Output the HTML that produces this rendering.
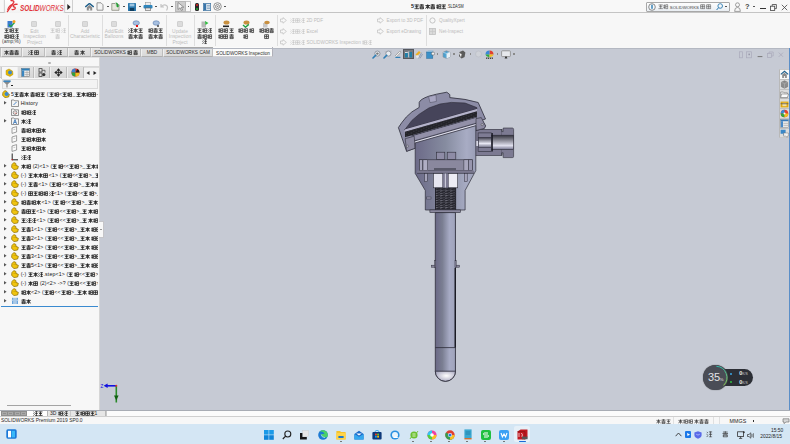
<!DOCTYPE html>
<html><head><meta charset="utf-8">
<style>
*{box-sizing:border-box}
body{margin:0;width:790px;height:444px;overflow:hidden;position:relative;background:#f7f7f7;font-family:"Liberation Sans",sans-serif;color:#333}
.a{position:absolute}
.t{position:absolute;white-space:nowrap;line-height:1}
.c{position:absolute;white-space:nowrap;line-height:1;text-align:center;width:60px}
svg.g{display:inline-block;width:1em;height:1em;vertical-align:-0.14em;overflow:visible}
svg.g use{stroke-width:1.05}
b svg.g use{stroke-width:1.6}
.m svg.g use{stroke-width:1.5}
</style></head><body>
<svg width="0" height="0" style="position:absolute"><defs><symbol id="g0" viewBox="0 0 10 10"><path d="M1.2 1.4 H8.8 V8.8 H1.2Z M1.2 5 H8.8 M5 1.4 V8.8" fill="none" stroke="currentColor"/></symbol><symbol id="g1" viewBox="0 0 10 10"><path d="M1 1.8 H9 M2 5 H8 M0.8 8.8 H9.2 M5 1.2 V8.8" fill="none" stroke="currentColor"/></symbol><symbol id="g2" viewBox="0 0 10 10"><path d="M2.4 0.8 V9.4 M0.6 3.4 H4 M0.8 6.6 H3.8 M5 1.4 H9 V8.8 H5Z M5 5 H9" fill="none" stroke="currentColor"/></symbol><symbol id="g3" viewBox="0 0 10 10"><path d="M0.8 2.8 H9.2 M5 0.6 V9.6 M4.6 3.4 L1 8.6 M5.4 3.4 L9 8.6 M2.5 6 H7.5" fill="none" stroke="currentColor"/></symbol><symbol id="g4" viewBox="0 0 10 10"><path d="M1.4 1.6 H8.6 M5 0.4 V3.8 M0.8 3.8 H9.2 M2 5.6 H8 V9.2 H2Z M2 7.4 H8" fill="none" stroke="currentColor"/></symbol><symbol id="g5" viewBox="0 0 10 10"><path d="M1.2 1.6 L3 3 M0.8 4.8 L2.6 6 M1 9.2 L3 6.8 M4.4 1.4 H9.4 M6.8 0.8 V9.4 M4.4 5 H9.4 M4.4 9 H9.4" fill="none" stroke="currentColor"/></symbol></defs></svg><!-- title bar -->
<div class="a" style="left:0;top:0;width:790px;height:13px;background:#f8f8f8;border-bottom:1px solid #c4c4c4"></div>
<div class="a" style="left:4px;top:-1px;width:61px;height:15px;background:linear-gradient(#ffffff,#f2f2f2);border:1px solid #d4d4d4;border-radius:0 0 2px 2px;box-shadow:0 1px 1px #c0c0c0"></div>
<svg class="a" style="left:0;top:0" width="20" height="14" viewBox="0 0 20 14"><path d="M11 0.6 Q14.6 0.6 13.6 2.6 L7.4 11.6" fill="none" stroke="#e2363b" stroke-width="1.3" stroke-linecap="round"/><path d="M12.6 4.6 Q9 5 7.6 10" fill="none" stroke="#e2363b" stroke-width="1.1"/><path d="M17.6 4.4 Q14.2 3.8 13.2 5.6 Q12.8 6.6 14.6 7.2 Q15.8 7.8 14.8 9 Q13.6 10 11.6 9.4" fill="none" stroke="#e2363b" stroke-width="1.3"/></svg>
<div class="t" style="left:20px;top:3.9px;font-size:8.4px;font-weight:bold;font-style:italic;color:#e2363b;transform:scaleX(0.765);transform-origin:0 0">SOLID<span style="font-weight:normal">WORKS</span></div>
<svg class="a" style="left:66.5px;top:3.5px" width="4" height="6"><path d="M0.3 0 L3.6 3 L0.3 6Z" fill="#222"/></svg>
<div class="a" style="left:72px;top:0;width:1px;height:12px;background:#d0d0d0"></div>
<!-- home -->
<svg class="a" style="left:85px;top:3px" width="9" height="8" viewBox="0 0 9 8"><path d="M0.3 4 L4.5 0.4 L8.7 4" fill="none" stroke="#1f5f8b" stroke-width="1.4"/><path d="M1.8 4.2 L4.5 2 L7.2 4.2 V7.6 H1.8Z" fill="#8c8c8c"/><rect x="3.8" y="5.4" width="1.4" height="2.2" fill="#eee"/></svg>
<!-- new -->
<svg class="a" style="left:96px;top:2px" width="8" height="9" viewBox="0 0 8 9"><path d="M1 0.8 H5 L7 2.8 V8.2 H1Z" fill="#f4f4f4" stroke="#8a8a8a" stroke-width="0.9"/></svg>
<div class="a" style="left:107px;top:6px;width:1.8px;height:1.2px;background:#555"></div>
<!-- open -->
<svg class="a" style="left:111px;top:2px" width="10" height="9" viewBox="0 0 10 9"><path d="M0.8 1.5 H4 L5 2.5 H8 V8.3 H0.8Z" fill="#e6e6dc" stroke="#8a8a80" stroke-width="0.8"/><path d="M4.6 0.6 Q7.2 0.6 7.2 3.4 L8.6 3.4 L6.6 5.6 L4.6 3.4 L6 3.4 Q6 1.6 4.6 1.6Z" fill="#20a030"/></svg>
<div class="a" style="left:123px;top:6px;width:1.8px;height:1.2px;background:#555"></div>
<!-- save -->
<svg class="a" style="left:128px;top:3px" width="8" height="8" viewBox="0 0 8 8"><rect x="0" y="0" width="8" height="8" rx="0.6" fill="#2a78ad"/><rect x="1.6" y="0.6" width="4.8" height="2.8" fill="#9cc4e0"/><rect x="1.8" y="5" width="4.4" height="3" fill="#0f3e60"/></svg>
<div class="a" style="left:139px;top:6px;width:1.8px;height:1.2px;background:#555"></div>
<!-- print -->
<svg class="a" style="left:143px;top:2px" width="10" height="9" viewBox="0 0 10 9"><rect x="2.5" y="0.6" width="5" height="2.6" fill="#f0f0f0" stroke="#999" stroke-width="0.6"/><rect x="0.5" y="3" width="9" height="3.6" rx="1" fill="#2f86bd"/><rect x="2.3" y="6" width="5.4" height="2.4" fill="#e8e8e8" stroke="#666" stroke-width="0.6"/></svg>
<div class="a" style="left:155px;top:6px;width:1.8px;height:1.2px;background:#555"></div>
<!-- undo -->
<svg class="a" style="left:160px;top:3px" width="9" height="8" viewBox="0 0 9 8"><path d="M1 1 L1 4 L4 4 M1.5 3.5 Q4 1 6.5 2.5 Q8.5 4 6.5 7.5" fill="none" stroke="#c4c4c4" stroke-width="1.2"/></svg>
<div class="a" style="left:171px;top:6px;width:1.8px;height:1.2px;background:#555"></div>
<!-- select -->
<div class="a" style="left:175px;top:1px;width:11px;height:11px;background:#cdcdcd;border:1px solid #b8b8b8"></div>
<div class="a" style="left:186px;top:1px;width:5px;height:11px;background:#fafafa;border:1px solid #c8c8c8;border-left:none"></div>
<svg class="a" style="left:177px;top:2px" width="8" height="9" viewBox="0 0 8 9"><path d="M1 0.5 L1 7.5 L3 5.8 L4.5 8.6 L5.6 8 L4.2 5.3 L6.8 5.2Z" fill="#f5f5f5" stroke="#777" stroke-width="0.7"/></svg>
<div class="a" style="left:187.5px;top:6px;width:1.8px;height:1.2px;background:#555"></div>
<!-- traffic -->
<div class="a" style="left:195px;top:3px;width:4px;height:8px;background:#2a2a2a;border-radius:1.5px"></div>
<div class="a" style="left:196px;top:4px;width:2px;height:2px;background:#e02020;border-radius:1px"></div>
<div class="a" style="left:196px;top:7.5px;width:2px;height:2px;background:#20b030;border-radius:1px"></div>
<!-- file props -->
<svg class="a" style="left:203px;top:3px" width="8" height="8" viewBox="0 0 8 8"><rect x="0.4" y="0.4" width="7.2" height="7.2" fill="#e8eef4" stroke="#4a7ca8" stroke-width="0.8"/><rect x="0.8" y="0.8" width="2.4" height="6.4" fill="#3a76aa"/><path d="M4 2.4 H7 M4 4 H7 M4 5.6 H7" stroke="#6a8fb0" stroke-width="0.7"/></svg>
<!-- gear -->
<svg class="a" style="left:213px;top:2px" width="9" height="9" viewBox="0 0 9 9"><circle cx="4.5" cy="4.5" r="3.8" fill="none" stroke="#888" stroke-width="0.9"/><circle cx="4.5" cy="4.5" r="2" fill="none" stroke="#888" stroke-width="0.9"/><circle cx="4.5" cy="4.5" r="0.8" fill="#888"/></svg>
<div class="a" style="left:224px;top:6px;width:1.8px;height:1.2px;background:#555"></div>
<!-- title -->
<div class="t" style="left:411px;top:3.6px;font-size:5.45px;color:#222"><b>5<svg class="g" viewBox="0 0 10 10"><use href="#g1"/></svg><svg class="g" viewBox="0 0 10 10"><use href="#g4"/></svg><svg class="g" viewBox="0 0 10 10"><use href="#g3"/></svg><svg class="g" viewBox="0 0 10 10"><use href="#g4"/></svg><svg class="g" viewBox="0 0 10 10"><use href="#g2"/></svg><svg class="g" viewBox="0 0 10 10"><use href="#g1"/></svg></b><span style="font-size:4.6px;display:inline-block;transform:scaleX(0.82);transform-origin:0 0">.SLDASM</span></div>
<!-- search -->
<div class="a" style="left:646px;top:2px;width:84px;height:10px;background:linear-gradient(#fdfdfd,#e9eef3);border:1px solid #a8a8a8;border-radius:1px"></div>
<svg class="a" style="left:648px;top:3px" width="8" height="8" viewBox="0 0 8 8"><circle cx="4" cy="4" r="3.3" fill="#f4f8fb" stroke="#707070" stroke-width="0.8"/><rect x="3.3" y="1.8" width="1.4" height="4" fill="#2a7ab0"/></svg>
<div class="t" style="left:657.5px;top:4px;font-size:5.4px;color:#444"><svg class="g" viewBox="0 0 10 10"><use href="#g1"/></svg><svg class="g" viewBox="0 0 10 10"><use href="#g2"/></svg> <span style="font-size:4.3px">SOLIDWORKS</span> <svg class="g" viewBox="0 0 10 10"><use href="#g0"/></svg><svg class="g" viewBox="0 0 10 10"><use href="#g0"/></svg></div>
<svg class="a" style="left:716px;top:3px" width="7" height="8" viewBox="0 0 7 8"><circle cx="4.2" cy="3" r="2.3" fill="none" stroke="#2a7ab0" stroke-width="0.9"/><path d="M2.6 4.6 L0.6 7" stroke="#2a7ab0" stroke-width="1"/></svg>
<div class="a" style="left:725px;top:6px;width:1.8px;height:1.2px;background:#555"></div>
<svg class="a" style="left:734px;top:2px" width="7" height="10" viewBox="0 0 7 10"><circle cx="3.5" cy="2.8" r="2" fill="none" stroke="#888" stroke-width="0.8"/><path d="M0.6 9.4 Q0.6 5.4 3.5 5.4 Q6.4 5.4 6.4 9.4Z" fill="none" stroke="#888" stroke-width="0.8"/></svg>
<div class="t" style="left:745px;top:3.2px;font-size:7.4px;font-weight:bold;color:#444">?</div>
<div class="a" style="left:753px;top:6px;width:1.8px;height:1.2px;background:#555"></div>
<div class="a" style="left:760px;top:8px;width:6px;height:1.2px;background:#333"></div>
<svg class="a" style="left:770px;top:3.5px" width="7" height="7" viewBox="0 0 7 7"><rect x="0.5" y="2.2" width="4.2" height="4.2" fill="none" stroke="#444" stroke-width="0.8"/><path d="M2.2 2.2 V0.5 H6.4 V4.6 H4.7" fill="none" stroke="#444" stroke-width="0.8"/></svg>
<svg class="a" style="left:781px;top:3.5px" width="7" height="7" viewBox="0 0 7 7"><path d="M0.8 0.8 L6.2 6.2 M6.2 0.8 L0.8 6.2" stroke="#444" stroke-width="0.8"/></svg>
<!-- ribbon -->
<div class="a" style="left:0;top:13px;width:790px;height:35px;background:#f7f7f7"></div>
<!-- viewport -->
<div class="a" style="left:100px;top:48px;width:690px;height:363px;background:#c6cad4"></div>
<!-- left panel -->
<div class="a" style="left:0;top:57px;width:100px;height:354px;background:#f7f7f7;border-right:1px solid #d6d6d6"></div>
<!-- bottom strip -->
<div class="a" style="left:0;top:410px;width:790px;height:6px;background:#f4f4f4;border-top:1px solid #bdbdbd"></div>
<!-- status bar -->
<div class="a" style="left:0;top:416px;width:790px;height:8px;background:#f7f7f7;border-top:1px solid #dcdcdc"></div>
<!-- taskbar -->
<div class="a" style="left:0;top:424px;width:790px;height:20px;background:#d3e5f3"></div>
<!-- ribbon content -->
<div class="c" style="left:-18.7px;top:27.8px;font-size:5.2px;color:#3c3c3c;font-weight:bold"><b><svg class="g" viewBox="0 0 10 10"><use href="#g1"/></svg><svg class="g" viewBox="0 0 10 10"><use href="#g2"/></svg><svg class="g" viewBox="0 0 10 10"><use href="#g1"/></svg></b></div>
<div class="c" style="left:-18.7px;top:33.6px;font-size:5.2px;color:#3c3c3c;font-weight:bold"><b><svg class="g" viewBox="0 0 10 10"><use href="#g2"/></svg><svg class="g" viewBox="0 0 10 10"><use href="#g2"/></svg><svg class="g" viewBox="0 0 10 10"><use href="#g5"/></svg></b></div>
<div class="c" style="left:-18.7px;top:40.4px;font-size:4.9px;color:#3c3c3c;font-weight:normal">(amp;%)</div>
<div class="c" style="left:4.5px;top:30.3px;font-size:4.9px;color:#bcbcbc;font-weight:normal">Edit</div>
<div class="c" style="left:4.5px;top:35.3px;font-size:4.9px;color:#bcbcbc;font-weight:normal">Inspection</div>
<div class="c" style="left:4.5px;top:40.5px;font-size:4.9px;color:#bcbcbc;font-weight:normal">Project</div>
<div class="c" style="left:28px;top:27.8px;font-size:5.2px;color:#bcbcbc;font-weight:normal"><svg class="g" viewBox="0 0 10 10"><use href="#g1"/></svg><svg class="g" viewBox="0 0 10 10"><use href="#g2"/></svg><svg class="g" viewBox="0 0 10 10"><use href="#g5"/></svg></div>
<div class="c" style="left:28px;top:33.6px;font-size:5.2px;color:#bcbcbc;font-weight:normal"><svg class="g" viewBox="0 0 10 10"><use href="#g4"/></svg></div>
<div class="a" style="left:68px;top:15px;width:1px;height:31px;background:#dedede"></div>
<div class="c" style="left:55px;top:30.3px;font-size:4.9px;color:#bcbcbc;font-weight:normal">Add</div>
<div class="c" style="left:55px;top:35.3px;font-size:4.9px;color:#bcbcbc;font-weight:normal">Characteristic</div>
<div class="a" style="left:102px;top:15px;width:1px;height:31px;background:#dedede"></div>
<div class="c" style="left:84px;top:30.3px;font-size:4.9px;color:#bcbcbc;font-weight:normal">Add/Edit</div>
<div class="c" style="left:84px;top:35.3px;font-size:4.9px;color:#bcbcbc;font-weight:normal">Balloons</div>
<div class="c" style="left:105.5px;top:27.8px;font-size:5.2px;color:#3c3c3c;font-weight:bold"><b><svg class="g" viewBox="0 0 10 10"><use href="#g5"/></svg><svg class="g" viewBox="0 0 10 10"><use href="#g3"/></svg><svg class="g" viewBox="0 0 10 10"><use href="#g1"/></svg></b></div>
<div class="c" style="left:105.5px;top:33.6px;font-size:5.2px;color:#3c3c3c;font-weight:bold"><b><svg class="g" viewBox="0 0 10 10"><use href="#g4"/></svg><svg class="g" viewBox="0 0 10 10"><use href="#g3"/></svg><svg class="g" viewBox="0 0 10 10"><use href="#g4"/></svg></b></div>
<div class="c" style="left:125.80000000000001px;top:27.8px;font-size:5.2px;color:#3c3c3c;font-weight:bold"><b><svg class="g" viewBox="0 0 10 10"><use href="#g2"/></svg><svg class="g" viewBox="0 0 10 10"><use href="#g4"/></svg><svg class="g" viewBox="0 0 10 10"><use href="#g1"/></svg></b></div>
<div class="c" style="left:125.80000000000001px;top:33.6px;font-size:5.2px;color:#3c3c3c;font-weight:bold"><b><svg class="g" viewBox="0 0 10 10"><use href="#g4"/></svg><svg class="g" viewBox="0 0 10 10"><use href="#g3"/></svg><svg class="g" viewBox="0 0 10 10"><use href="#g4"/></svg></b></div>
<div class="a" style="left:166px;top:15px;width:1px;height:31px;background:#dedede"></div>
<div class="c" style="left:150px;top:30.3px;font-size:4.9px;color:#bcbcbc;font-weight:normal">Update</div>
<div class="c" style="left:150px;top:35.3px;font-size:4.9px;color:#bcbcbc;font-weight:normal">Inspection</div>
<div class="c" style="left:150px;top:40.5px;font-size:4.9px;color:#bcbcbc;font-weight:normal">Project</div>
<div class="a" style="left:194px;top:15px;width:1px;height:31px;background:#dedede"></div>
<div class="c" style="left:174.5px;top:27.8px;font-size:5.2px;color:#3c3c3c;font-weight:bold"><b><svg class="g" viewBox="0 0 10 10"><use href="#g1"/></svg><svg class="g" viewBox="0 0 10 10"><use href="#g2"/></svg><svg class="g" viewBox="0 0 10 10"><use href="#g5"/></svg></b></div>
<div class="c" style="left:174.5px;top:33.6px;font-size:5.2px;color:#3c3c3c;font-weight:bold"><b><svg class="g" viewBox="0 0 10 10"><use href="#g4"/></svg><svg class="g" viewBox="0 0 10 10"><use href="#g2"/></svg><svg class="g" viewBox="0 0 10 10"><use href="#g2"/></svg></b></div>
<div class="c" style="left:174.5px;top:39.2px;font-size:5.2px;color:#3c3c3c;font-weight:bold"><b><svg class="g" viewBox="0 0 10 10"><use href="#g5"/></svg></b></div>
<div class="a" style="left:215px;top:15px;width:1px;height:31px;background:#dedede"></div>
<div class="c" style="left:196px;top:27.8px;font-size:5.2px;color:#3c3c3c;font-weight:bold"><b><svg class="g" viewBox="0 0 10 10"><use href="#g2"/></svg><svg class="g" viewBox="0 0 10 10"><use href="#g2"/></svg><svg class="g" viewBox="0 0 10 10"><use href="#g1"/></svg></b></div>
<div class="c" style="left:196px;top:33.6px;font-size:5.2px;color:#3c3c3c;font-weight:bold"><b><svg class="g" viewBox="0 0 10 10"><use href="#g2"/></svg><svg class="g" viewBox="0 0 10 10"><use href="#g0"/></svg><svg class="g" viewBox="0 0 10 10"><use href="#g4"/></svg></b></div>
<div class="c" style="left:216px;top:27.8px;font-size:5.2px;color:#3c3c3c;font-weight:bold"><b><svg class="g" viewBox="0 0 10 10"><use href="#g2"/></svg><svg class="g" viewBox="0 0 10 10"><use href="#g2"/></svg><svg class="g" viewBox="0 0 10 10"><use href="#g2"/></svg></b></div>
<div class="c" style="left:216px;top:33.6px;font-size:5.2px;color:#3c3c3c;font-weight:bold"><b><svg class="g" viewBox="0 0 10 10"><use href="#g2"/></svg></b></div>
<div class="c" style="left:236.60000000000002px;top:27.8px;font-size:5.2px;color:#3c3c3c;font-weight:bold"><b><svg class="g" viewBox="0 0 10 10"><use href="#g2"/></svg><svg class="g" viewBox="0 0 10 10"><use href="#g2"/></svg><svg class="g" viewBox="0 0 10 10"><use href="#g4"/></svg></b></div>
<div class="c" style="left:236.60000000000002px;top:33.6px;font-size:5.2px;color:#3c3c3c;font-weight:bold"><b><svg class="g" viewBox="0 0 10 10"><use href="#g0"/></svg></b></div>
<div class="a" style="left:277px;top:15px;width:1px;height:31px;background:#dedede"></div>
<div class="t" style="left:290px;top:17.8px;font-size:5px;color:#bcbcbc"><svg class="g" viewBox="0 0 10 10"><use href="#g5"/></svg><svg class="g" viewBox="0 0 10 10"><use href="#g0"/></svg><svg class="g" viewBox="0 0 10 10"><use href="#g5"/></svg> <span style="font-size:4.7px">2D PDF</span></div>
<div class="t" style="left:290px;top:28.8px;font-size:5px;color:#bcbcbc"><svg class="g" viewBox="0 0 10 10"><use href="#g5"/></svg><svg class="g" viewBox="0 0 10 10"><use href="#g0"/></svg><svg class="g" viewBox="0 0 10 10"><use href="#g5"/></svg> <span style="font-size:4.7px">Excel</span></div>
<div class="t" style="left:290px;top:39.6px;font-size:5px;color:#bcbcbc"><svg class="g" viewBox="0 0 10 10"><use href="#g5"/></svg><svg class="g" viewBox="0 0 10 10"><use href="#g0"/></svg><svg class="g" viewBox="0 0 10 10"><use href="#g5"/></svg> <span style="font-size:4.7px">SOLIDWORKS Inspection</span> <svg class="g" viewBox="0 0 10 10"><use href="#g2"/></svg><svg class="g" viewBox="0 0 10 10"><use href="#g5"/></svg></div>
<div class="t" style="left:386.5px;top:18.2px;font-size:5px;color:#bcbcbc"><span style="font-size:4.7px">Export to 3D PDF</span></div>
<div class="t" style="left:386.5px;top:29.2px;font-size:5px;color:#bcbcbc"><span style="font-size:4.7px">Export eDrawing</span></div>
<div class="a" style="left:426px;top:15px;width:1px;height:31px;background:#dedede"></div>
<div class="t" style="left:439px;top:18.2px;font-size:5px;color:#bcbcbc"><span style="font-size:4.7px">QualityXpert</span></div>
<div class="t" style="left:439px;top:29.2px;font-size:5px;color:#bcbcbc"><span style="font-size:4.7px">Net-Inspect</span></div>
<svg class="a" style="left:279.5px;top:17px" width="7" height="7" viewBox="0 0 7 7"><path d="M0.5 2 H3 V0.6 L6.4 3.4 L3 6.2 V4.8 H0.5Z" fill="none" stroke="#c4c4c4" stroke-width="0.8"/></svg>
<svg class="a" style="left:279.5px;top:28px" width="7" height="7" viewBox="0 0 7 7"><path d="M0.5 2 H3 V0.6 L6.4 3.4 L3 6.2 V4.8 H0.5Z" fill="none" stroke="#c4c4c4" stroke-width="0.8"/></svg>
<svg class="a" style="left:279.5px;top:38.5px" width="7" height="7" viewBox="0 0 7 7"><path d="M0.5 2 H3 V0.6 L6.4 3.4 L3 6.2 V4.8 H0.5Z" fill="none" stroke="#c4c4c4" stroke-width="0.8"/></svg>
<svg class="a" style="left:377px;top:17px" width="7" height="7" viewBox="0 0 7 7"><path d="M0.5 2 H3 V0.6 L6.4 3.4 L3 6.2 V4.8 H0.5Z" fill="none" stroke="#c4c4c4" stroke-width="0.8"/></svg>
<svg class="a" style="left:377px;top:28px" width="7" height="7" viewBox="0 0 7 7"><path d="M0.5 2 H3 V0.6 L6.4 3.4 L3 6.2 V4.8 H0.5Z" fill="none" stroke="#c4c4c4" stroke-width="0.8"/></svg>
<svg class="a" style="left:429px;top:17px" width="7" height="7"><circle cx="3.5" cy="3.5" r="2.6" fill="none" stroke="#c4c4c4" stroke-width="1"/></svg>
<svg class="a" style="left:429px;top:28px" width="7" height="7"><rect x="0.5" y="0.5" width="6" height="6" fill="#dadada" stroke="#c0c0c0" stroke-width="0.8"/><path d="M3.5 0.5 V6.5 M0.5 3.5 H6.5" stroke="#c4c4c4" stroke-width="0.6"/></svg>
<svg class="a" style="left:7px;top:20px" width="9" height="8" viewBox="0 0 9 8"><rect x="0.5" y="1" width="5" height="6.5" fill="#3b7bd0"/><path d="M2 4.6 L3.8 6.6 L7.6 2.6" fill="none" stroke="#20a040" stroke-width="1.3"/><circle cx="7" cy="1.6" r="1.5" fill="#f5a020"/></svg>
<div class="a" style="left:31px;top:20.5px;width:6px;height:6px;background:#dcdcdc;border:1px solid #d0d0d0;border-radius:1px"></div>
<div class="a" style="left:55px;top:20.5px;width:6px;height:6px;background:#dcdcdc;border:1px solid #d0d0d0;border-radius:1px"></div>
<div class="a" style="left:82px;top:20.5px;width:6px;height:6px;background:#dcdcdc;border:1px solid #d0d0d0;border-radius:1px"></div>
<div class="a" style="left:111px;top:20.5px;width:6px;height:6px;background:#dcdcdc;border:1px solid #d0d0d0;border-radius:1px"></div>
<div class="a" style="left:177px;top:20.5px;width:6px;height:6px;background:#dcdcdc;border:1px solid #d0d0d0;border-radius:1px"></div>
<svg class="a" style="left:131.5px;top:20px" width="9" height="8" viewBox="0 0 9 8"><ellipse cx="4.2" cy="3" rx="3.2" ry="2.2" fill="#a8c0e0" stroke="#6a8ab8" stroke-width="0.7"/></svg>
<svg class="a" style="left:151.8px;top:20px" width="9" height="8" viewBox="0 0 9 8"><ellipse cx="4.2" cy="3" rx="3.2" ry="2.2" fill="#a8c0e0" stroke="#6a8ab8" stroke-width="0.7"/></svg>
<div class="a" style="left:136px;top:25px;width:2px;height:2px;background:#e01010"></div>
<div class="a" style="left:157px;top:25px;width:2px;height:2px;background:#444;border-radius:1px"></div>
<svg class="a" style="left:201px;top:20px" width="8" height="8" viewBox="0 0 8 8"><rect x="0.5" y="1.5" width="4.5" height="6" fill="#b8b8b8"/><path d="M4 1 L7.5 3 L4.5 5" fill="#30c040"/></svg>
<svg class="a" style="left:222px;top:20px" width="8" height="8" viewBox="0 0 8 8"><ellipse cx="4.5" cy="2.5" rx="3" ry="2" fill="#c89040"/><rect x="1" y="5.5" width="6" height="1.6" fill="#222"/></svg>
<svg class="a" style="left:242px;top:20px" width="8" height="8" viewBox="0 0 8 8"><ellipse cx="4.5" cy="2.5" rx="3" ry="2" fill="#c89040"/><path d="M1 5 L3.5 7.2 L6.8 4.4" fill="none" stroke="#20a040" stroke-width="1.4"/></svg>
<svg class="a" style="left:262px;top:20px" width="8" height="8" viewBox="0 0 8 8"><rect x="1" y="3" width="4.5" height="4.5" fill="#c8c8c8"/><ellipse cx="5" cy="2.5" rx="2.8" ry="1.8" fill="#c89040"/></svg>
<!-- tabs -->
<div class="a" style="left:0;top:47px;width:213px;height:1px;background:#a8a8a8"></div>
<div class="a" style="left:1px;top:48px;width:21px;height:9px;background:linear-gradient(#e4e4e4,#d9d9d9);border-right:1px solid #bdbdbd;border-left:1px solid #f0f0f0;border-bottom:1px solid #b0b0b0"></div>
<div class="t" style="left:1px;width:21px;text-align:center;top:50px;font-size:5.2px;color:#2c2c2c;font-weight:bold"><span class="m"><svg class="g" viewBox="0 0 10 10"><use href="#g3"/></svg><svg class="g" viewBox="0 0 10 10"><use href="#g4"/></svg><svg class="g" viewBox="0 0 10 10"><use href="#g4"/></svg></span></div>
<div class="a" style="left:22px;top:48px;width:23px;height:9px;background:linear-gradient(#e4e4e4,#d9d9d9);border-right:1px solid #bdbdbd;border-left:1px solid #f0f0f0;border-bottom:1px solid #b0b0b0"></div>
<div class="t" style="left:22px;width:23px;text-align:center;top:50px;font-size:5.2px;color:#2c2c2c;font-weight:bold"><span class="m"><svg class="g" viewBox="0 0 10 10"><use href="#g5"/></svg><svg class="g" viewBox="0 0 10 10"><use href="#g0"/></svg></span></div>
<div class="a" style="left:45px;top:48px;width:23px;height:9px;background:linear-gradient(#e4e4e4,#d9d9d9);border-right:1px solid #bdbdbd;border-left:1px solid #f0f0f0;border-bottom:1px solid #b0b0b0"></div>
<div class="t" style="left:45px;width:23px;text-align:center;top:50px;font-size:5.2px;color:#2c2c2c;font-weight:bold"><span class="m"><svg class="g" viewBox="0 0 10 10"><use href="#g4"/></svg><svg class="g" viewBox="0 0 10 10"><use href="#g5"/></svg></span></div>
<div class="a" style="left:68px;top:48px;width:23px;height:9px;background:linear-gradient(#e4e4e4,#d9d9d9);border-right:1px solid #bdbdbd;border-left:1px solid #f0f0f0;border-bottom:1px solid #b0b0b0"></div>
<div class="t" style="left:68px;width:23px;text-align:center;top:50px;font-size:5.2px;color:#2c2c2c;font-weight:bold"><span class="m"><svg class="g" viewBox="0 0 10 10"><use href="#g4"/></svg><svg class="g" viewBox="0 0 10 10"><use href="#g3"/></svg></span></div>
<div class="a" style="left:91px;top:48px;width:50px;height:9px;background:linear-gradient(#e4e4e4,#d9d9d9);border-right:1px solid #bdbdbd;border-left:1px solid #f0f0f0;border-bottom:1px solid #b0b0b0"></div>
<div class="t" style="left:91px;width:50px;text-align:center;top:50px;font-size:5.2px;color:#2c2c2c;font-weight:normal"><span class="m"></span><span style="font-size:4.7px">SOLIDWORKS</span><span class="m"> <svg class="g" viewBox="0 0 10 10"><use href="#g2"/></svg><svg class="g" viewBox="0 0 10 10"><use href="#g4"/></svg></span></div>
<div class="a" style="left:141px;top:48px;width:22px;height:9px;background:linear-gradient(#e4e4e4,#d9d9d9);border-right:1px solid #bdbdbd;border-left:1px solid #f0f0f0;border-bottom:1px solid #b0b0b0"></div>
<div class="t" style="left:141px;width:22px;text-align:center;top:50px;font-size:5.2px;color:#2c2c2c;font-weight:normal"><span class="m"></span><span style="font-size:4.7px">MBD</span><span class="m"></span></div>
<div class="a" style="left:163px;top:48px;width:50px;height:9px;background:linear-gradient(#e4e4e4,#d9d9d9);border-right:1px solid #bdbdbd;border-left:1px solid #f0f0f0;border-bottom:1px solid #b0b0b0"></div>
<div class="t" style="left:163px;width:50px;text-align:center;top:50px;font-size:5.2px;color:#2c2c2c;font-weight:normal"><span class="m"></span><span style="font-size:4.7px">SOLIDWORKS</span><span class="m"> </span><span style="font-size:4.7px">CAM</span><span class="m"></span></div>
<div class="a" style="left:0;top:48px;width:1px;height:9px;background:#c0c0c0"></div>
<div class="a" style="left:213px;top:47px;width:60px;height:10px;background:#fbfbfb;border-right:1px solid #b0b0b8;border-bottom:1px solid #d0d0d4"></div>
<div class="t" style="left:213px;width:60px;text-align:center;top:52.1px;font-size:4.65px;color:#2c2c2c">SOLIDWORKS Inspection</div>
<!-- panel -->
<div class="a" style="left:0;top:57px;width:99px;height:10px;background:#f6f6f6;border-top:1px solid #e2e2e2;border-bottom:1px solid #d8d8d8"></div>
<div class="a" style="left:48px;top:61.5px;width:2.5px;height:2.5px;border-radius:50%;background:#b0b0b0"></div>
<div class="a" style="left:0;top:67px;width:99px;height:11px;background:#dcdcdc;border-bottom:1px solid #c8c8c8"></div>
<div class="a" style="left:17px;top:67px;width:17px;height:11px;background:linear-gradient(#e2e2e2,#d6d6d6);border-right:1px solid #bcbcbc;border-left:1px solid #efefef"></div>
<div class="a" style="left:34px;top:67px;width:16px;height:11px;background:linear-gradient(#e2e2e2,#d6d6d6);border-right:1px solid #bcbcbc;border-left:1px solid #efefef"></div>
<div class="a" style="left:50px;top:67px;width:17px;height:11px;background:linear-gradient(#e2e2e2,#d6d6d6);border-right:1px solid #bcbcbc;border-left:1px solid #efefef"></div>
<div class="a" style="left:67px;top:67px;width:17px;height:11px;background:linear-gradient(#e2e2e2,#d6d6d6);border-right:1px solid #bcbcbc;border-left:1px solid #efefef"></div>
<div class="a" style="left:1px;top:67px;width:16px;height:12px;background:#f7f7f7;border-left:1px solid #c8c8c8"></div>
<div class="a" style="left:84px;top:68px;width:15px;height:10px;background:#f2f2f2"></div>
<svg class="a" style="left:86px;top:71px" width="4" height="4"><path d="M3.5 0 L0.5 2 L3.5 4Z" fill="#222"/></svg>
<svg class="a" style="left:93px;top:71px" width="4" height="4"><path d="M0.5 0 L3.5 2 L0.5 4Z" fill="#222"/></svg>
<svg class="a" style="left:5px;top:68px" width="9" height="9" viewBox="0 0 9 9"><path d="M1 2.5 L4 1 L7.5 3 L8 6.5 L5 8.4 L1.2 6.8Z" fill="#e6b800" stroke="#b08a00" stroke-width="0.5"/><circle cx="5" cy="4.5" r="2" fill="#3c88cc"/></svg>
<svg class="a" style="left:21px;top:68px" width="9" height="9" viewBox="0 0 9 9"><rect x="0.5" y="0.5" width="8" height="8" fill="#e8e8e8" stroke="#777" stroke-width="0.6"/><rect x="0.5" y="0.5" width="8" height="2" fill="#2f7fb8"/><rect x="0.8" y="2.5" width="2.4" height="6" fill="#3a86c0"/><path d="M3.5 4.5 H8.5 M3.5 6.5 H8.5 M6 2.5 V8.5" stroke="#999" stroke-width="0.5"/></svg>
<svg class="a" style="left:38px;top:68px" width="8" height="9" viewBox="0 0 8 9"><rect x="1" y="0.6" width="3" height="3.4" fill="none" stroke="#444" stroke-width="0.8"/><rect x="1" y="5" width="3" height="3.4" fill="none" stroke="#444" stroke-width="0.8"/><path d="M4 2.3 H7 V4.5" fill="none" stroke="#444" stroke-width="0.7"/><circle cx="5.8" cy="6.6" r="1.6" fill="#333"/></svg>
<svg class="a" style="left:54px;top:68px" width="9" height="9" viewBox="0 0 9 9"><path d="M4.5 0.3 L6 2 H3Z M4.5 8.7 L6 7 H3Z M0.3 4.5 L2 3 V6Z M8.7 4.5 L7 3 V6Z" fill="#222"/><circle cx="4.5" cy="4.5" r="2.2" fill="none" stroke="#222" stroke-width="0.9"/><path d="M4.5 1.5 V7.5 M1.5 4.5 H7.5" stroke="#222" stroke-width="0.8"/></svg>
<svg class="a" style="left:71px;top:68px" width="9" height="9" viewBox="0 0 9 9"><circle cx="4.5" cy="4.5" r="4" fill="#e03020"/><path d="M4.5 4.5 L0.5 4.5 A4 4 0 0 1 4.5 0.5Z" fill="#3a80d0"/><path d="M4.5 4.5 L0.5 4.5 A4 4 0 0 0 4.5 8.5Z" fill="#30a040"/><path d="M4.5 4.5 L4.5 8.5 A4 4 0 0 0 8.5 4.5Z" fill="#f0c020"/><path d="M4.5 4.5 L6.5 1 A4 4 0 0 1 8.5 4.5Z" fill="#202020"/></svg>
<div class="a" style="left:2px;top:79px;width:96px;height:10px;background:#f3f3f3;border:1px solid #dadada"></div>
<svg class="a" style="left:3px;top:80px" width="8" height="8" viewBox="0 0 8 8"><path d="M0.5 0.5 H7.5 V1.8 L4.6 4.6 V7.6 L3.4 7.6 V4.6 L0.5 1.8Z" fill="#8a8a8a"/><rect x="0.5" y="0.5" width="7" height="1.6" fill="#3a86c0"/></svg>
<div class="a" style="left:11px;top:84.5px;width:1.5px;height:1.5px;background:#222"></div>
<div class="a" style="left:0;top:89px;width:98px;height:218px;overflow:hidden">
<svg class="a" style="left:2px;top:0.5999999999999943px" width="8" height="8" viewBox="0 0 8 8"><path d="M0.9 2.6 L2.8 0.6 L4.8 1.4 L5 3.2 L7.4 4.4 L6.6 7 L3 7.6 L0.6 5.4Z" fill="#f0c410" stroke="#8a6c00" stroke-width="0.7"/><path d="M2.4 3.4 L5 3.4 L6.6 5" fill="none" stroke="#b89000" stroke-width="0.5"/><circle cx="4.6" cy="4" r="2.1" fill="#3c88cc"/></svg>
<div class="t" style="left:11px;top:2.7999999999999945px;font-size:5.2px;color:#111;letter-spacing:0.15px">5<span class="m" style="color:#1a1a1a"><svg class="g" viewBox="0 0 10 10"><use href="#g1"/></svg><svg class="g" viewBox="0 0 10 10"><use href="#g4"/></svg><svg class="g" viewBox="0 0 10 10"><use href="#g3"/></svg><svg class="g" viewBox="0 0 10 10"><use href="#g4"/></svg><svg class="g" viewBox="0 0 10 10"><use href="#g2"/></svg><svg class="g" viewBox="0 0 10 10"><use href="#g1"/></svg></span>  (<span class="m" style="color:#1a1a1a"><svg class="g" viewBox="0 0 10 10"><use href="#g1"/></svg><svg class="g" viewBox="0 0 10 10"><use href="#g2"/></svg></span>&lt;<span class="m" style="color:#1a1a1a"><svg class="g" viewBox="0 0 10 10"><use href="#g1"/></svg><svg class="g" viewBox="0 0 10 10"><use href="#g2"/></svg></span>_<span class="m" style="color:#1a1a1a"><svg class="g" viewBox="0 0 10 10"><use href="#g1"/></svg><svg class="g" viewBox="0 0 10 10"><use href="#g3"/></svg><svg class="g" viewBox="0 0 10 10"><use href="#g2"/></svg><svg class="g" viewBox="0 0 10 10"><use href="#g0"/></svg></span>-1&gt;)</div>
<svg class="a" style="left:3.5px;top:11.799999999999994px" width="3" height="4"><path d="M0 0 L2.6 1.8 L0 3.6Z" fill="#555"/></svg>
<svg class="a" style="left:10.9px;top:9.599999999999994px" width="8" height="8" viewBox="0 0 8 8"><path d="M0.5 1 H3 L3.8 1.8 H7.5 V7.5 H0.5Z" fill="#f4f4f4" stroke="#6a6a6a" stroke-width="0.7"/><path d="M2.5 6 L5.5 3" stroke="#3a7ac0" stroke-width="0.9"/></svg>
<div class="t" style="left:20.7px;top:11.799999999999994px;font-size:5.2px;color:#111;letter-spacing:0.15px">History</div>
<svg class="a" style="left:10.9px;top:18.599999999999994px" width="8" height="8" viewBox="0 0 8 8"><path d="M0.5 1 H3 L3.8 1.8 H7.5 V7.5 H0.5Z" fill="#f4f4f4" stroke="#6a6a6a" stroke-width="0.7"/><circle cx="4" cy="4.6" r="1.8" fill="none" stroke="#555" stroke-width="0.6"/><path d="M4 4.6 L5.2 5.8" stroke="#e03020" stroke-width="0.8"/></svg>
<div class="t" style="left:20.7px;top:20.799999999999994px;font-size:5.2px;color:#111;letter-spacing:0.15px"><span class="m" style="color:#1a1a1a"><svg class="g" viewBox="0 0 10 10"><use href="#g2"/></svg><svg class="g" viewBox="0 0 10 10"><use href="#g2"/></svg><svg class="g" viewBox="0 0 10 10"><use href="#g5"/></svg></span></div>
<svg class="a" style="left:3.5px;top:29.799999999999994px" width="3" height="4"><path d="M0 0 L2.6 1.8 L0 3.6Z" fill="#555"/></svg>
<svg class="a" style="left:10.9px;top:27.599999999999994px" width="8" height="8" viewBox="0 0 8 8"><path d="M0.5 1 H3 L3.8 1.8 H7.5 V7.5 H0.5Z" fill="#f4f4f4" stroke="#6a6a6a" stroke-width="0.7"/><path d="M2.4 6.8 L4 2.6 L5.6 6.8 M3 5.4 H5" fill="none" stroke="#2a6ab0" stroke-width="0.8"/></svg>
<div class="t" style="left:20.7px;top:29.799999999999994px;font-size:5.2px;color:#111;letter-spacing:0.15px"><span class="m" style="color:#1a1a1a"><svg class="g" viewBox="0 0 10 10"><use href="#g3"/></svg><svg class="g" viewBox="0 0 10 10"><use href="#g5"/></svg></span></div>
<svg class="a" style="left:10.9px;top:36.599999999999994px" width="7" height="8" viewBox="0 0 7 8"><path d="M1 2 L5.6 0.6 V6 L1 7.4Z" fill="#fafafa" stroke="#7a7a7a" stroke-width="0.7"/><path d="M2.4 3.4 H4.2" stroke="#999" stroke-width="0.5"/></svg>
<div class="t" style="left:20.7px;top:38.8px;font-size:5.2px;color:#111;letter-spacing:0.15px"><span class="m" style="color:#1a1a1a"><svg class="g" viewBox="0 0 10 10"><use href="#g4"/></svg><svg class="g" viewBox="0 0 10 10"><use href="#g2"/></svg><svg class="g" viewBox="0 0 10 10"><use href="#g3"/></svg><svg class="g" viewBox="0 0 10 10"><use href="#g0"/></svg><svg class="g" viewBox="0 0 10 10"><use href="#g3"/></svg></span></div>
<svg class="a" style="left:10.9px;top:45.599999999999994px" width="7" height="8" viewBox="0 0 7 8"><path d="M1 2 L5.6 0.6 V6 L1 7.4Z" fill="#fafafa" stroke="#7a7a7a" stroke-width="0.7"/><path d="M2.4 3.4 H4.2" stroke="#999" stroke-width="0.5"/></svg>
<div class="t" style="left:20.7px;top:47.8px;font-size:5.2px;color:#111;letter-spacing:0.15px"><span class="m" style="color:#1a1a1a"><svg class="g" viewBox="0 0 10 10"><use href="#g1"/></svg><svg class="g" viewBox="0 0 10 10"><use href="#g2"/></svg><svg class="g" viewBox="0 0 10 10"><use href="#g3"/></svg><svg class="g" viewBox="0 0 10 10"><use href="#g0"/></svg><svg class="g" viewBox="0 0 10 10"><use href="#g3"/></svg></span></div>
<svg class="a" style="left:10.9px;top:54.599999999999994px" width="7" height="8" viewBox="0 0 7 8"><path d="M1 2 L5.6 0.6 V6 L1 7.4Z" fill="#fafafa" stroke="#7a7a7a" stroke-width="0.7"/><path d="M2.4 3.4 H4.2" stroke="#999" stroke-width="0.5"/></svg>
<div class="t" style="left:20.7px;top:56.8px;font-size:5.2px;color:#111;letter-spacing:0.15px"><span class="m" style="color:#1a1a1a"><svg class="g" viewBox="0 0 10 10"><use href="#g1"/></svg><svg class="g" viewBox="0 0 10 10"><use href="#g2"/></svg><svg class="g" viewBox="0 0 10 10"><use href="#g3"/></svg><svg class="g" viewBox="0 0 10 10"><use href="#g0"/></svg><svg class="g" viewBox="0 0 10 10"><use href="#g3"/></svg></span></div>
<svg class="a" style="left:10.9px;top:63.599999999999994px" width="8" height="8" viewBox="0 0 8 8"><path d="M1.2 0.5 V6.8 H7" fill="none" stroke="#222" stroke-width="1"/><circle cx="1.2" cy="6.8" r="0.8" fill="#c02020"/></svg>
<div class="t" style="left:20.7px;top:65.8px;font-size:5.2px;color:#111;letter-spacing:0.15px"><span class="m" style="color:#1a1a1a"><svg class="g" viewBox="0 0 10 10"><use href="#g5"/></svg><svg class="g" viewBox="0 0 10 10"><use href="#g5"/></svg></span></div>
<svg class="a" style="left:3.5px;top:74.8px" width="3" height="4"><path d="M0 0 L2.6 1.8 L0 3.6Z" fill="#555"/></svg>
<svg class="a" style="left:10.9px;top:72.6px" width="8" height="8" viewBox="0 0 8 8"><path d="M0.9 2.6 L2.8 0.6 L4.8 1.4 L5 3.2 L7.4 4.4 L6.6 7 L3 7.6 L0.6 5.4Z" fill="#f0c410" stroke="#8a6c00" stroke-width="0.7"/><path d="M2.4 3.4 L5 3.4 L6.6 5" fill="none" stroke="#b89000" stroke-width="0.5"/></svg>
<div class="t" style="left:20.7px;top:74.8px;font-size:5.2px;color:#111;letter-spacing:0.15px"><span class="m" style="color:#1a1a1a"><svg class="g" viewBox="0 0 10 10"><use href="#g3"/></svg><svg class="g" viewBox="0 0 10 10"><use href="#g2"/></svg></span> (2)&lt;1&gt; (<span class="m" style="color:#1a1a1a"><svg class="g" viewBox="0 0 10 10"><use href="#g1"/></svg><svg class="g" viewBox="0 0 10 10"><use href="#g2"/></svg></span>&lt;&lt;<span class="m" style="color:#1a1a1a"><svg class="g" viewBox="0 0 10 10"><use href="#g1"/></svg><svg class="g" viewBox="0 0 10 10"><use href="#g2"/></svg></span>&gt;_<span class="m" style="color:#1a1a1a"><svg class="g" viewBox="0 0 10 10"><use href="#g1"/></svg><svg class="g" viewBox="0 0 10 10"><use href="#g3"/></svg><svg class="g" viewBox="0 0 10 10"><use href="#g2"/></svg><svg class="g" viewBox="0 0 10 10"><use href="#g0"/></svg></span></div>
<svg class="a" style="left:3.5px;top:83.8px" width="3" height="4"><path d="M0 0 L2.6 1.8 L0 3.6Z" fill="#555"/></svg>
<svg class="a" style="left:10.9px;top:81.6px" width="8" height="8" viewBox="0 0 8 8"><path d="M0.9 2.6 L2.8 0.6 L4.8 1.4 L5 3.2 L7.4 4.4 L6.6 7 L3 7.6 L0.6 5.4Z" fill="#f0c410" stroke="#8a6c00" stroke-width="0.7"/><path d="M2.4 3.4 L5 3.4 L6.6 5" fill="none" stroke="#b89000" stroke-width="0.5"/></svg>
<div class="t" style="left:20.7px;top:83.8px;font-size:5.2px;color:#111;letter-spacing:0.15px">(-) <span class="m" style="color:#1a1a1a"><svg class="g" viewBox="0 0 10 10"><use href="#g1"/></svg><svg class="g" viewBox="0 0 10 10"><use href="#g3"/></svg><svg class="g" viewBox="0 0 10 10"><use href="#g3"/></svg><svg class="g" viewBox="0 0 10 10"><use href="#g0"/></svg></span>&lt;1&gt; (<span class="m" style="color:#1a1a1a"><svg class="g" viewBox="0 0 10 10"><use href="#g1"/></svg><svg class="g" viewBox="0 0 10 10"><use href="#g2"/></svg></span>&lt;&lt;<span class="m" style="color:#1a1a1a"><svg class="g" viewBox="0 0 10 10"><use href="#g1"/></svg><svg class="g" viewBox="0 0 10 10"><use href="#g2"/></svg></span>&gt;_<span class="m" style="color:#1a1a1a"><svg class="g" viewBox="0 0 10 10"><use href="#g1"/></svg><svg class="g" viewBox="0 0 10 10"><use href="#g3"/></svg><svg class="g" viewBox="0 0 10 10"><use href="#g2"/></svg><svg class="g" viewBox="0 0 10 10"><use href="#g0"/></svg></span></div>
<svg class="a" style="left:3.5px;top:92.8px" width="3" height="4"><path d="M0 0 L2.6 1.8 L0 3.6Z" fill="#555"/></svg>
<svg class="a" style="left:10.9px;top:90.6px" width="8" height="8" viewBox="0 0 8 8"><path d="M0.9 2.6 L2.8 0.6 L4.8 1.4 L5 3.2 L7.4 4.4 L6.6 7 L3 7.6 L0.6 5.4Z" fill="#f0c410" stroke="#8a6c00" stroke-width="0.7"/><path d="M2.4 3.4 L5 3.4 L6.6 5" fill="none" stroke="#b89000" stroke-width="0.5"/></svg>
<div class="t" style="left:20.7px;top:92.8px;font-size:5.2px;color:#111;letter-spacing:0.15px">(-) <span class="m" style="color:#1a1a1a"><svg class="g" viewBox="0 0 10 10"><use href="#g1"/></svg><svg class="g" viewBox="0 0 10 10"><use href="#g4"/></svg></span>&lt;1&gt; (<span class="m" style="color:#1a1a1a"><svg class="g" viewBox="0 0 10 10"><use href="#g1"/></svg><svg class="g" viewBox="0 0 10 10"><use href="#g2"/></svg></span>&lt;&lt;<span class="m" style="color:#1a1a1a"><svg class="g" viewBox="0 0 10 10"><use href="#g1"/></svg><svg class="g" viewBox="0 0 10 10"><use href="#g2"/></svg></span>&gt;_<span class="m" style="color:#1a1a1a"><svg class="g" viewBox="0 0 10 10"><use href="#g1"/></svg><svg class="g" viewBox="0 0 10 10"><use href="#g3"/></svg><svg class="g" viewBox="0 0 10 10"><use href="#g2"/></svg><svg class="g" viewBox="0 0 10 10"><use href="#g0"/></svg></span></div>
<svg class="a" style="left:3.5px;top:101.8px" width="3" height="4"><path d="M0 0 L2.6 1.8 L0 3.6Z" fill="#555"/></svg>
<svg class="a" style="left:10.9px;top:99.6px" width="8" height="8" viewBox="0 0 8 8"><path d="M0.9 2.6 L2.8 0.6 L4.8 1.4 L5 3.2 L7.4 4.4 L6.6 7 L3 7.6 L0.6 5.4Z" fill="#f0c410" stroke="#8a6c00" stroke-width="0.7"/><path d="M2.4 3.4 L5 3.4 L6.6 5" fill="none" stroke="#b89000" stroke-width="0.5"/></svg>
<div class="t" style="left:20.7px;top:101.8px;font-size:5.2px;color:#111;letter-spacing:0.15px">(-) <span class="m" style="color:#1a1a1a"><svg class="g" viewBox="0 0 10 10"><use href="#g0"/></svg><svg class="g" viewBox="0 0 10 10"><use href="#g1"/></svg><svg class="g" viewBox="0 0 10 10"><use href="#g2"/></svg><svg class="g" viewBox="0 0 10 10"><use href="#g2"/></svg><svg class="g" viewBox="0 0 10 10"><use href="#g5"/></svg></span>&lt;1&gt; (<span class="m" style="color:#1a1a1a"><svg class="g" viewBox="0 0 10 10"><use href="#g1"/></svg><svg class="g" viewBox="0 0 10 10"><use href="#g2"/></svg></span>&lt;&lt;<span class="m" style="color:#1a1a1a"><svg class="g" viewBox="0 0 10 10"><use href="#g1"/></svg><svg class="g" viewBox="0 0 10 10"><use href="#g2"/></svg></span>&gt;_<span class="m" style="color:#1a1a1a"><svg class="g" viewBox="0 0 10 10"><use href="#g1"/></svg><svg class="g" viewBox="0 0 10 10"><use href="#g3"/></svg><svg class="g" viewBox="0 0 10 10"><use href="#g2"/></svg><svg class="g" viewBox="0 0 10 10"><use href="#g0"/></svg></span></div>
<svg class="a" style="left:3.5px;top:110.8px" width="3" height="4"><path d="M0 0 L2.6 1.8 L0 3.6Z" fill="#555"/></svg>
<svg class="a" style="left:10.9px;top:108.6px" width="8" height="8" viewBox="0 0 8 8"><path d="M0.9 2.6 L2.8 0.6 L4.8 1.4 L5 3.2 L7.4 4.4 L6.6 7 L3 7.6 L0.6 5.4Z" fill="#f0c410" stroke="#8a6c00" stroke-width="0.7"/><path d="M2.4 3.4 L5 3.4 L6.6 5" fill="none" stroke="#b89000" stroke-width="0.5"/></svg>
<div class="t" style="left:20.7px;top:110.8px;font-size:5.2px;color:#111;letter-spacing:0.15px"><span class="m" style="color:#1a1a1a"><svg class="g" viewBox="0 0 10 10"><use href="#g2"/></svg><svg class="g" viewBox="0 0 10 10"><use href="#g4"/></svg><svg class="g" viewBox="0 0 10 10"><use href="#g2"/></svg><svg class="g" viewBox="0 0 10 10"><use href="#g3"/></svg></span>&lt;1&gt; (<span class="m" style="color:#1a1a1a"><svg class="g" viewBox="0 0 10 10"><use href="#g1"/></svg><svg class="g" viewBox="0 0 10 10"><use href="#g2"/></svg></span>&lt;&lt;<span class="m" style="color:#1a1a1a"><svg class="g" viewBox="0 0 10 10"><use href="#g1"/></svg><svg class="g" viewBox="0 0 10 10"><use href="#g2"/></svg></span>&gt;_<span class="m" style="color:#1a1a1a"><svg class="g" viewBox="0 0 10 10"><use href="#g1"/></svg><svg class="g" viewBox="0 0 10 10"><use href="#g3"/></svg><svg class="g" viewBox="0 0 10 10"><use href="#g2"/></svg><svg class="g" viewBox="0 0 10 10"><use href="#g0"/></svg></span></div>
<svg class="a" style="left:3.5px;top:119.8px" width="3" height="4"><path d="M0 0 L2.6 1.8 L0 3.6Z" fill="#555"/></svg>
<svg class="a" style="left:10.9px;top:117.6px" width="8" height="8" viewBox="0 0 8 8"><path d="M0.9 2.6 L2.8 0.6 L4.8 1.4 L5 3.2 L7.4 4.4 L6.6 7 L3 7.6 L0.6 5.4Z" fill="#f0c410" stroke="#8a6c00" stroke-width="0.7"/><path d="M2.4 3.4 L5 3.4 L6.6 5" fill="none" stroke="#b89000" stroke-width="0.5"/></svg>
<div class="t" style="left:20.7px;top:119.8px;font-size:5.2px;color:#111;letter-spacing:0.15px"><span class="m" style="color:#1a1a1a"><svg class="g" viewBox="0 0 10 10"><use href="#g4"/></svg><svg class="g" viewBox="0 0 10 10"><use href="#g0"/></svg><svg class="g" viewBox="0 0 10 10"><use href="#g1"/></svg></span>&lt;1&gt; (<span class="m" style="color:#1a1a1a"><svg class="g" viewBox="0 0 10 10"><use href="#g1"/></svg><svg class="g" viewBox="0 0 10 10"><use href="#g2"/></svg></span>&lt;&lt;<span class="m" style="color:#1a1a1a"><svg class="g" viewBox="0 0 10 10"><use href="#g1"/></svg><svg class="g" viewBox="0 0 10 10"><use href="#g2"/></svg></span>&gt;_<span class="m" style="color:#1a1a1a"><svg class="g" viewBox="0 0 10 10"><use href="#g1"/></svg><svg class="g" viewBox="0 0 10 10"><use href="#g3"/></svg><svg class="g" viewBox="0 0 10 10"><use href="#g2"/></svg><svg class="g" viewBox="0 0 10 10"><use href="#g0"/></svg></span></div>
<svg class="a" style="left:3.5px;top:128.79999999999998px" width="3" height="4"><path d="M0 0 L2.6 1.8 L0 3.6Z" fill="#555"/></svg>
<svg class="a" style="left:10.9px;top:126.6px" width="8" height="8" viewBox="0 0 8 8"><path d="M0.9 2.6 L2.8 0.6 L4.8 1.4 L5 3.2 L7.4 4.4 L6.6 7 L3 7.6 L0.6 5.4Z" fill="#f0c410" stroke="#8a6c00" stroke-width="0.7"/><path d="M2.4 3.4 L5 3.4 L6.6 5" fill="none" stroke="#b89000" stroke-width="0.5"/></svg>
<div class="t" style="left:20.7px;top:128.79999999999998px;font-size:5.2px;color:#111;letter-spacing:0.15px"><span class="m" style="color:#1a1a1a"><svg class="g" viewBox="0 0 10 10"><use href="#g1"/></svg><svg class="g" viewBox="0 0 10 10"><use href="#g5"/></svg><svg class="g" viewBox="0 0 10 10"><use href="#g5"/></svg></span>&lt;1&gt; (<span class="m" style="color:#1a1a1a"><svg class="g" viewBox="0 0 10 10"><use href="#g1"/></svg><svg class="g" viewBox="0 0 10 10"><use href="#g2"/></svg></span>&lt;&lt;<span class="m" style="color:#1a1a1a"><svg class="g" viewBox="0 0 10 10"><use href="#g1"/></svg><svg class="g" viewBox="0 0 10 10"><use href="#g2"/></svg></span>&gt;_<span class="m" style="color:#1a1a1a"><svg class="g" viewBox="0 0 10 10"><use href="#g1"/></svg><svg class="g" viewBox="0 0 10 10"><use href="#g3"/></svg><svg class="g" viewBox="0 0 10 10"><use href="#g2"/></svg><svg class="g" viewBox="0 0 10 10"><use href="#g0"/></svg></span></div>
<svg class="a" style="left:3.5px;top:137.79999999999998px" width="3" height="4"><path d="M0 0 L2.6 1.8 L0 3.6Z" fill="#555"/></svg>
<svg class="a" style="left:10.9px;top:135.6px" width="8" height="8" viewBox="0 0 8 8"><path d="M0.9 2.6 L2.8 0.6 L4.8 1.4 L5 3.2 L7.4 4.4 L6.6 7 L3 7.6 L0.6 5.4Z" fill="#f0c410" stroke="#8a6c00" stroke-width="0.7"/><path d="M2.4 3.4 L5 3.4 L6.6 5" fill="none" stroke="#b89000" stroke-width="0.5"/></svg>
<div class="t" style="left:20.7px;top:137.79999999999998px;font-size:5.2px;color:#111;letter-spacing:0.15px"><span class="m" style="color:#1a1a1a"><svg class="g" viewBox="0 0 10 10"><use href="#g1"/></svg><svg class="g" viewBox="0 0 10 10"><use href="#g4"/></svg></span>1&lt;1&gt; (<span class="m" style="color:#1a1a1a"><svg class="g" viewBox="0 0 10 10"><use href="#g1"/></svg><svg class="g" viewBox="0 0 10 10"><use href="#g2"/></svg></span>&lt;&lt;<span class="m" style="color:#1a1a1a"><svg class="g" viewBox="0 0 10 10"><use href="#g1"/></svg><svg class="g" viewBox="0 0 10 10"><use href="#g2"/></svg></span>&gt;_<span class="m" style="color:#1a1a1a"><svg class="g" viewBox="0 0 10 10"><use href="#g1"/></svg><svg class="g" viewBox="0 0 10 10"><use href="#g3"/></svg><svg class="g" viewBox="0 0 10 10"><use href="#g2"/></svg><svg class="g" viewBox="0 0 10 10"><use href="#g0"/></svg></span></div>
<svg class="a" style="left:3.5px;top:146.79999999999998px" width="3" height="4"><path d="M0 0 L2.6 1.8 L0 3.6Z" fill="#555"/></svg>
<svg class="a" style="left:10.9px;top:144.6px" width="8" height="8" viewBox="0 0 8 8"><path d="M0.9 2.6 L2.8 0.6 L4.8 1.4 L5 3.2 L7.4 4.4 L6.6 7 L3 7.6 L0.6 5.4Z" fill="#f0c410" stroke="#8a6c00" stroke-width="0.7"/><path d="M2.4 3.4 L5 3.4 L6.6 5" fill="none" stroke="#b89000" stroke-width="0.5"/></svg>
<div class="t" style="left:20.7px;top:146.79999999999998px;font-size:5.2px;color:#111;letter-spacing:0.15px"><span class="m" style="color:#1a1a1a"><svg class="g" viewBox="0 0 10 10"><use href="#g1"/></svg><svg class="g" viewBox="0 0 10 10"><use href="#g4"/></svg></span>2&lt;1&gt; (<span class="m" style="color:#1a1a1a"><svg class="g" viewBox="0 0 10 10"><use href="#g1"/></svg><svg class="g" viewBox="0 0 10 10"><use href="#g2"/></svg></span>&lt;&lt;<span class="m" style="color:#1a1a1a"><svg class="g" viewBox="0 0 10 10"><use href="#g1"/></svg><svg class="g" viewBox="0 0 10 10"><use href="#g2"/></svg></span>&gt;_<span class="m" style="color:#1a1a1a"><svg class="g" viewBox="0 0 10 10"><use href="#g1"/></svg><svg class="g" viewBox="0 0 10 10"><use href="#g3"/></svg><svg class="g" viewBox="0 0 10 10"><use href="#g2"/></svg><svg class="g" viewBox="0 0 10 10"><use href="#g0"/></svg></span></div>
<svg class="a" style="left:3.5px;top:155.79999999999998px" width="3" height="4"><path d="M0 0 L2.6 1.8 L0 3.6Z" fill="#555"/></svg>
<svg class="a" style="left:10.9px;top:153.6px" width="8" height="8" viewBox="0 0 8 8"><path d="M0.9 2.6 L2.8 0.6 L4.8 1.4 L5 3.2 L7.4 4.4 L6.6 7 L3 7.6 L0.6 5.4Z" fill="#f0c410" stroke="#8a6c00" stroke-width="0.7"/><path d="M2.4 3.4 L5 3.4 L6.6 5" fill="none" stroke="#b89000" stroke-width="0.5"/></svg>
<div class="t" style="left:20.7px;top:155.79999999999998px;font-size:5.2px;color:#111;letter-spacing:0.15px"><span class="m" style="color:#1a1a1a"><svg class="g" viewBox="0 0 10 10"><use href="#g1"/></svg><svg class="g" viewBox="0 0 10 10"><use href="#g4"/></svg></span>2&lt;2&gt; (<span class="m" style="color:#1a1a1a"><svg class="g" viewBox="0 0 10 10"><use href="#g1"/></svg><svg class="g" viewBox="0 0 10 10"><use href="#g2"/></svg></span>&lt;&lt;<span class="m" style="color:#1a1a1a"><svg class="g" viewBox="0 0 10 10"><use href="#g1"/></svg><svg class="g" viewBox="0 0 10 10"><use href="#g2"/></svg></span>&gt;_<span class="m" style="color:#1a1a1a"><svg class="g" viewBox="0 0 10 10"><use href="#g1"/></svg><svg class="g" viewBox="0 0 10 10"><use href="#g3"/></svg><svg class="g" viewBox="0 0 10 10"><use href="#g2"/></svg><svg class="g" viewBox="0 0 10 10"><use href="#g0"/></svg></span></div>
<svg class="a" style="left:3.5px;top:164.79999999999998px" width="3" height="4"><path d="M0 0 L2.6 1.8 L0 3.6Z" fill="#555"/></svg>
<svg class="a" style="left:10.9px;top:162.6px" width="8" height="8" viewBox="0 0 8 8"><path d="M0.9 2.6 L2.8 0.6 L4.8 1.4 L5 3.2 L7.4 4.4 L6.6 7 L3 7.6 L0.6 5.4Z" fill="#f0c410" stroke="#8a6c00" stroke-width="0.7"/><path d="M2.4 3.4 L5 3.4 L6.6 5" fill="none" stroke="#b89000" stroke-width="0.5"/></svg>
<div class="t" style="left:20.7px;top:164.79999999999998px;font-size:5.2px;color:#111;letter-spacing:0.15px"><span class="m" style="color:#1a1a1a"><svg class="g" viewBox="0 0 10 10"><use href="#g1"/></svg><svg class="g" viewBox="0 0 10 10"><use href="#g4"/></svg></span>3&lt;1&gt; (<span class="m" style="color:#1a1a1a"><svg class="g" viewBox="0 0 10 10"><use href="#g1"/></svg><svg class="g" viewBox="0 0 10 10"><use href="#g2"/></svg></span>&lt;&lt;<span class="m" style="color:#1a1a1a"><svg class="g" viewBox="0 0 10 10"><use href="#g1"/></svg><svg class="g" viewBox="0 0 10 10"><use href="#g2"/></svg></span>&gt;_<span class="m" style="color:#1a1a1a"><svg class="g" viewBox="0 0 10 10"><use href="#g1"/></svg><svg class="g" viewBox="0 0 10 10"><use href="#g3"/></svg><svg class="g" viewBox="0 0 10 10"><use href="#g2"/></svg><svg class="g" viewBox="0 0 10 10"><use href="#g0"/></svg></span></div>
<svg class="a" style="left:3.5px;top:173.8px" width="3" height="4"><path d="M0 0 L2.6 1.8 L0 3.6Z" fill="#555"/></svg>
<svg class="a" style="left:10.9px;top:171.60000000000002px" width="8" height="8" viewBox="0 0 8 8"><path d="M0.9 2.6 L2.8 0.6 L4.8 1.4 L5 3.2 L7.4 4.4 L6.6 7 L3 7.6 L0.6 5.4Z" fill="#f0c410" stroke="#8a6c00" stroke-width="0.7"/><path d="M2.4 3.4 L5 3.4 L6.6 5" fill="none" stroke="#b89000" stroke-width="0.5"/></svg>
<div class="t" style="left:20.7px;top:173.8px;font-size:5.2px;color:#111;letter-spacing:0.15px"><span class="m" style="color:#1a1a1a"><svg class="g" viewBox="0 0 10 10"><use href="#g1"/></svg><svg class="g" viewBox="0 0 10 10"><use href="#g4"/></svg></span>5&lt;1&gt; (<span class="m" style="color:#1a1a1a"><svg class="g" viewBox="0 0 10 10"><use href="#g1"/></svg><svg class="g" viewBox="0 0 10 10"><use href="#g2"/></svg></span>&lt;&lt;<span class="m" style="color:#1a1a1a"><svg class="g" viewBox="0 0 10 10"><use href="#g1"/></svg><svg class="g" viewBox="0 0 10 10"><use href="#g2"/></svg></span>&gt;_<span class="m" style="color:#1a1a1a"><svg class="g" viewBox="0 0 10 10"><use href="#g1"/></svg><svg class="g" viewBox="0 0 10 10"><use href="#g3"/></svg><svg class="g" viewBox="0 0 10 10"><use href="#g2"/></svg><svg class="g" viewBox="0 0 10 10"><use href="#g0"/></svg></span></div>
<svg class="a" style="left:3.5px;top:182.8px" width="3" height="4"><path d="M0 0 L2.6 1.8 L0 3.6Z" fill="#555"/></svg>
<svg class="a" style="left:10.9px;top:180.60000000000002px" width="8" height="8" viewBox="0 0 8 8"><path d="M0.9 2.6 L2.8 0.6 L4.8 1.4 L5 3.2 L7.4 4.4 L6.6 7 L3 7.6 L0.6 5.4Z" fill="#f0c410" stroke="#8a6c00" stroke-width="0.7"/><path d="M2.4 3.4 L5 3.4 L6.6 5" fill="none" stroke="#b89000" stroke-width="0.5"/></svg>
<div class="t" style="left:20.7px;top:182.8px;font-size:5.2px;color:#111;letter-spacing:0.15px">(-) <span class="m" style="color:#1a1a1a"><svg class="g" viewBox="0 0 10 10"><use href="#g1"/></svg><svg class="g" viewBox="0 0 10 10"><use href="#g3"/></svg><svg class="g" viewBox="0 0 10 10"><use href="#g5"/></svg></span>.step&lt;1&gt; (<span class="m" style="color:#1a1a1a"><svg class="g" viewBox="0 0 10 10"><use href="#g1"/></svg><svg class="g" viewBox="0 0 10 10"><use href="#g2"/></svg></span>&lt;&lt;<span class="m" style="color:#1a1a1a"><svg class="g" viewBox="0 0 10 10"><use href="#g1"/></svg><svg class="g" viewBox="0 0 10 10"><use href="#g2"/></svg></span>&gt;_<span class="m" style="color:#1a1a1a"><svg class="g" viewBox="0 0 10 10"><use href="#g1"/></svg><svg class="g" viewBox="0 0 10 10"><use href="#g3"/></svg><svg class="g" viewBox="0 0 10 10"><use href="#g2"/></svg><svg class="g" viewBox="0 0 10 10"><use href="#g0"/></svg></span></div>
<svg class="a" style="left:3.5px;top:191.8px" width="3" height="4"><path d="M0 0 L2.6 1.8 L0 3.6Z" fill="#555"/></svg>
<svg class="a" style="left:10.9px;top:189.60000000000002px" width="8" height="8" viewBox="0 0 8 8"><path d="M0.9 2.6 L2.8 0.6 L4.8 1.4 L5 3.2 L7.4 4.4 L6.6 7 L3 7.6 L0.6 5.4Z" fill="#f0c410" stroke="#8a6c00" stroke-width="0.7"/><path d="M2.4 3.4 L5 3.4 L6.6 5" fill="none" stroke="#b89000" stroke-width="0.5"/></svg>
<div class="t" style="left:20.7px;top:191.8px;font-size:5.2px;color:#111;letter-spacing:0.15px">(-) <span class="m" style="color:#1a1a1a"><svg class="g" viewBox="0 0 10 10"><use href="#g3"/></svg><svg class="g" viewBox="0 0 10 10"><use href="#g0"/></svg></span> (2)&lt;2&gt; -&gt;? (<span class="m" style="color:#1a1a1a"><svg class="g" viewBox="0 0 10 10"><use href="#g1"/></svg><svg class="g" viewBox="0 0 10 10"><use href="#g2"/></svg></span>&lt;&lt;<span class="m" style="color:#1a1a1a"><svg class="g" viewBox="0 0 10 10"><use href="#g1"/></svg><svg class="g" viewBox="0 0 10 10"><use href="#g2"/></svg></span>&gt;_<span class="m" style="color:#1a1a1a"><svg class="g" viewBox="0 0 10 10"><use href="#g1"/></svg><svg class="g" viewBox="0 0 10 10"><use href="#g3"/></svg><svg class="g" viewBox="0 0 10 10"><use href="#g2"/></svg><svg class="g" viewBox="0 0 10 10"><use href="#g0"/></svg></span></div>
<svg class="a" style="left:3.5px;top:200.8px" width="3" height="4"><path d="M0 0 L2.6 1.8 L0 3.6Z" fill="#555"/></svg>
<svg class="a" style="left:10.9px;top:198.60000000000002px" width="8" height="8" viewBox="0 0 8 8"><path d="M0.9 2.6 L2.8 0.6 L4.8 1.4 L5 3.2 L7.4 4.4 L6.6 7 L3 7.6 L0.6 5.4Z" fill="#f0c410" stroke="#8a6c00" stroke-width="0.7"/><path d="M2.4 3.4 L5 3.4 L6.6 5" fill="none" stroke="#b89000" stroke-width="0.5"/></svg>
<div class="t" style="left:20.7px;top:200.8px;font-size:5.2px;color:#111;letter-spacing:0.15px"><span class="m" style="color:#1a1a1a"><svg class="g" viewBox="0 0 10 10"><use href="#g2"/></svg><svg class="g" viewBox="0 0 10 10"><use href="#g3"/></svg></span>&lt;2&gt; (<span class="m" style="color:#1a1a1a"><svg class="g" viewBox="0 0 10 10"><use href="#g1"/></svg><svg class="g" viewBox="0 0 10 10"><use href="#g2"/></svg></span>&lt;&lt;<span class="m" style="color:#1a1a1a"><svg class="g" viewBox="0 0 10 10"><use href="#g1"/></svg><svg class="g" viewBox="0 0 10 10"><use href="#g2"/></svg></span>&gt;_<span class="m" style="color:#1a1a1a"><svg class="g" viewBox="0 0 10 10"><use href="#g1"/></svg><svg class="g" viewBox="0 0 10 10"><use href="#g3"/></svg><svg class="g" viewBox="0 0 10 10"><use href="#g2"/></svg><svg class="g" viewBox="0 0 10 10"><use href="#g0"/></svg></span></div>
<svg class="a" style="left:3.5px;top:209.8px" width="3" height="4"><path d="M0 0 L2.6 1.8 L0 3.6Z" fill="#555"/></svg>
<svg class="a" style="left:10.9px;top:207.60000000000002px" width="8" height="8" viewBox="0 0 8 8"><path d="M1.6 0.8 V7 M3 0.8 V7 M5 0.8 V7 M6.4 0.8 V7" stroke="#5a9ad8" stroke-width="1"/><rect x="0.8" y="2.6" width="6.4" height="1.4" fill="#a8c8e8"/></svg>
<div class="t" style="left:20.7px;top:209.8px;font-size:5.2px;color:#111;letter-spacing:0.15px"><span class="m" style="color:#1a1a1a"><svg class="g" viewBox="0 0 10 10"><use href="#g4"/></svg><svg class="g" viewBox="0 0 10 10"><use href="#g3"/></svg></span></div>
</div>
<div class="a" style="left:1px;top:306px;width:97px;height:1px;background:#3a8ad0"></div>
<div class="a" style="left:7px;top:404.6px;width:64px;height:1px;background:#a4a4a4"></div>
<div class="a" style="left:99px;top:221px;width:4.5px;height:17px;background:#f8f8f8;border:1px solid #c4c4c8;border-left:none"></div>
<div class="a" style="left:100px;top:228.6px;width:2px;height:0.8px;background:#999"></div>
<!-- view -->
<div class="a" style="left:100px;top:48px;width:690px;height:1px;background:#b4b8c2"></div>
<div class="a" style="left:789px;top:48px;width:1px;height:368px;background:#5b8fc8"></div>
<svg class="a" style="left:372px;top:50px" width="9" height="9" viewBox="0 0 9 9"><circle cx="5.4" cy="3.6" r="2.6" fill="#e8ecf0" stroke="#8a8f98" stroke-width="0.9"/><path d="M3.6 5.4 L1 8" stroke="#2f7fb5" stroke-width="1.6" stroke-linecap="round"/><circle cx="5.4" cy="3.6" r="1.2" fill="#777"/></svg>
<svg class="a" style="left:383px;top:50px" width="9" height="9" viewBox="0 0 9 9"><circle cx="5.4" cy="3.6" r="2.6" fill="#e8ecf0" stroke="#8a8f98" stroke-width="0.9"/><path d="M3.6 5.4 L1 8" stroke="#2f7fb5" stroke-width="1.6" stroke-linecap="round"/><path d="M8 0.6 L8.6 1.4 M1.8 1.6 L2.6 2" stroke="#999" stroke-width="0.6"/></svg>
<svg class="a" style="left:393px;top:50px" width="9" height="9" viewBox="0 0 9 9"><path d="M2 6 L6.6 1.4 Q8 1 7.8 2.4 L3.4 7" fill="#eee" stroke="#999" stroke-width="0.8"/><path d="M2.4 7.4 H7.4" stroke="#2f7fb5" stroke-width="1.2"/></svg>
<div class="a" style="left:403px;top:49px;width:11px;height:10px;background:#74787f;border:1px solid #55585e"></div>
<svg class="a" style="left:404px;top:50px" width="9" height="8" viewBox="0 0 9 8"><rect x="3.8" y="1.4" width="1.6" height="6" fill="#b8bcc4"/><rect x="1" y="2.6" width="2.8" height="4.8" fill="#1f7fa8"/><rect x="5.4" y="2" width="2.6" height="5.4" fill="#1f7fa8"/><rect x="1" y="2" width="2.8" height="0.9" fill="#e8e8e8"/></svg>
<svg class="a" style="left:415px;top:50px" width="8" height="9" viewBox="0 0 8 9"><path d="M0.5 4.5 L4 1 L5.6 2.4 L2.2 6Z" fill="#f0b020"/><path d="M3.6 8.4 L6.6 2.6 M5 8.4 L7.6 4" stroke="#8a9ab0" stroke-width="0.9"/><circle cx="2.4" cy="6.6" r="1.4" fill="#e8e8e8"/></svg>
<svg class="a" style="left:426px;top:50px" width="9" height="9" viewBox="0 0 9 9"><rect x="0.6" y="2" width="6.2" height="6.4" fill="#3a90c8" stroke="#2a6a98" stroke-width="0.5"/><path d="M0.6 2 L2.2 0.6 H7.6 L6.8 2Z" fill="#8ab8d8"/><circle cx="7" cy="3.6" r="1.6" fill="#f2f2f2" stroke="#555" stroke-width="0.5"/></svg>
<div class="a" style="left:436.75px;top:53.25px;width:1.4px;height:1.4px;background:#8a8a8a"></div>
<svg class="a" style="left:442px;top:50px" width="9" height="9" viewBox="0 0 9 9"><path d="M1 2.2 L4.4 0.8 L8 2.2 V7 L4.4 8.4 L1 7Z" fill="#4aa0d0" stroke="#8a9098" stroke-width="0.6"/><path d="M4.4 3.4 V8.4 M1 2.2 L4.4 3.4 L8 2.2" stroke="#dfe8f0" stroke-width="0.6" fill="none"/><path d="M5 3.4 L8 2.2 V7 L5 8.2Z" fill="#e8f0f6"/></svg>
<div class="a" style="left:453.25px;top:53.25px;width:1.4px;height:1.4px;background:#8a8a8a"></div>
<svg class="a" style="left:458px;top:50px" width="8" height="9" viewBox="0 0 8 9"><path d="M1.5 2 L5 0.6 L7.4 2.4 L6.6 7 L3.6 8.4 L1 6.2Z" fill="#5a5a5a"/><path d="M1 3 L3.6 4 L3 7.6" fill="#f4f4f4"/></svg>
<div class="a" style="left:469.75px;top:53.25px;width:1.4px;height:1.4px;background:#8a8a8a"></div>
<svg class="a" style="left:475px;top:50px" width="7" height="9" viewBox="0 0 7 9"><circle cx="3.5" cy="4" r="3" fill="#cfd2d8" stroke="#b8bcc4" stroke-width="0.6"/></svg>
<svg class="a" style="left:485px;top:50px" width="9" height="9" viewBox="0 0 9 9"><path d="M4.5 0.6 A4 4 0 0 1 8.5 4.6 H4.5Z" fill="#e04030"/><path d="M4.5 0.6 A4 4 0 0 0 0.5 4.6 H4.5Z" fill="#3a88d8"/><path d="M0.5 4.6 Q1 7 4.5 7.2 V4.6Z" fill="#30a840"/><path d="M8.5 4.6 Q8 7 4.5 7.2 V4.6Z" fill="#f0c020"/><path d="M1 7.6 H8 V8.8 H1Z" fill="#222"/><path d="M2.4 7.6 V8.8 M4.5 7.6 V8.8 M6.6 7.6 V8.8" stroke="#eee" stroke-width="0.8"/></svg>
<div class="a" style="left:496.75px;top:53.25px;width:1.4px;height:1.4px;background:#8a8a8a"></div>
<svg class="a" style="left:501px;top:50px" width="10" height="9" viewBox="0 0 10 9"><rect x="0.6" y="0.8" width="8.8" height="5.8" rx="0.8" fill="#e6e8ec" stroke="#888" stroke-width="0.8"/><path d="M3.6 8.4 H6.4 L5.6 6.6 H4.4Z" fill="#333"/></svg>
<div class="a" style="left:513.25px;top:53.25px;width:1.4px;height:1.4px;background:#8a8a8a"></div>
<svg class="a" style="left:739px;top:51px" width="50" height="8" viewBox="0 0 50 8"><rect x="0.5" y="0.8" width="3" height="6" fill="none" stroke="#aab" stroke-width="0.7"/><rect x="7.6" y="0.8" width="4.8" height="6" fill="none" stroke="#aab" stroke-width="0.7"/><rect x="9.4" y="2.6" width="1.6" height="1.6" fill="#99a"/><path d="M18.6 5.6 H23.4" stroke="#777" stroke-width="1"/><rect x="28.6" y="2.6" width="4" height="4" fill="none" stroke="#aab" stroke-width="0.7"/><path d="M30 2.6 V1 H34.2 V5 H32.6" fill="none" stroke="#aab" stroke-width="0.7"/><path d="M39.8 1.6 L44 5.8 M44 1.6 L39.8 5.8" stroke="#aab" stroke-width="0.8"/></svg>
<div class="a" style="left:779px;top:69px;width:10px;height:69px;background:#dcdcdc;border-left:1px solid #b8b8b8;border-top:1px solid #c8c8c8;border-bottom:1px solid #c8c8c8"></div>
<div class="a" style="left:780px;top:78.8px;width:9px;height:1px;background:#c2c2c2"></div>
<div class="a" style="left:780px;top:88.6px;width:9px;height:1px;background:#c2c2c2"></div>
<div class="a" style="left:780px;top:98.4px;width:9px;height:1px;background:#c2c2c2"></div>
<div class="a" style="left:780px;top:108.2px;width:9px;height:1px;background:#c2c2c2"></div>
<div class="a" style="left:780px;top:118.0px;width:9px;height:1px;background:#c2c2c2"></div>
<div class="a" style="left:780px;top:127.8px;width:9px;height:1px;background:#c2c2c2"></div>
<div class="a" style="left:780px;top:70px;width:9px;height:9px;background:#fafafa"></div>
<svg class="a" style="left:780px;top:70px" width="9" height="9" viewBox="0 0 9 9"><path d="M0.8 4.4 L4.5 1.2 L8.2 4.4" fill="none" stroke="#1f5f8b" stroke-width="1.2"/><path d="M2.2 4.6 L4.5 2.8 L6.8 4.6 V8 H2.2Z" fill="#8a8a8a"/><rect x="3.9" y="6" width="1.2" height="2" fill="#eee"/></svg>
<svg class="a" style="left:780px;top:80px" width="9" height="9" viewBox="0 0 9 9"><path d="M1.4 2.2 L4.5 0.8 L7.6 2.2 V6.8 L4.5 8.2 L1.4 6.8Z" fill="#8c8c8c" stroke="#666" stroke-width="0.5"/><path d="M1.4 2.2 L4.5 3.6 L7.6 2.2 M4.5 3.6 V8.2" stroke="#bbb" stroke-width="0.5" fill="none"/></svg>
<svg class="a" style="left:780px;top:89.5px" width="9" height="9" viewBox="0 0 9 9"><path d="M0.6 2 H3.4 L4 2.8 H7.4 V7.6 H0.6Z" fill="#eee" stroke="#777" stroke-width="0.6"/><path d="M1.6 4 H8.6 L7.4 7.6 H0.6Z" fill="#fafafa" stroke="#777" stroke-width="0.6"/></svg>
<svg class="a" style="left:780px;top:99.5px" width="9" height="9" viewBox="0 0 9 9"><rect x="0.6" y="1.6" width="7.8" height="5.8" fill="#e0a810"/><rect x="2.4" y="2.8" width="4.2" height="3.4" fill="#f4e0a0"/><rect x="0.6" y="3.4" width="7.8" height="0.8" fill="#555"/></svg>
<svg class="a" style="left:780px;top:109px" width="9" height="9" viewBox="0 0 9 9"><circle cx="4.5" cy="4.5" r="3.8" fill="#e04030"/><path d="M4.5 4.5 H0.7 A3.8 3.8 0 0 1 4.5 0.7Z" fill="#3a88d8"/><path d="M4.5 4.5 H0.7 A3.8 3.8 0 0 0 4.5 8.3Z" fill="#30a840"/><path d="M4.5 4.5 V8.3 A3.8 3.8 0 0 0 8.3 4.5Z" fill="#f0c020"/><circle cx="4.5" cy="4.5" r="1" fill="#fff"/></svg>
<svg class="a" style="left:780px;top:119px" width="9" height="9" viewBox="0 0 9 9"><rect x="0.6" y="0.6" width="7.8" height="7.8" fill="#e8e8e8" stroke="#888" stroke-width="0.5"/><rect x="0.6" y="0.6" width="7.8" height="1.6" fill="#3a7ab8"/><rect x="0.8" y="2.2" width="2.2" height="6" fill="#4a8ac8"/><path d="M3.4 4.4 H8.4 M3.4 6.4 H8.4" stroke="#999" stroke-width="0.5"/></svg>
<svg class="a" style="left:780px;top:129px" width="9" height="9" viewBox="0 0 9 9"><path d="M0.6 0.8 H5.6 V4.8 L3 6.4 V4.8 H0.6Z" fill="#3a88c8"/><path d="M3.6 4 H8.4 V7.2 H7.2 V8.4 L5.8 7.2 H3.6Z" fill="#f2f2f2" stroke="#777" stroke-width="0.5"/></svg>
<svg class="a" style="left:100px;top:376px" width="24" height="30" viewBox="0 0 24 30"><path d="M16.3 9.8 H6.5" stroke="#1010e0" stroke-width="1.6"/><path d="M3.6 9.8 L7.6 7.6 V12Z" fill="#1010e0"/><path d="M16.3 9.8 V26.5" stroke="#2a8a2a" stroke-width="1.6"/><path d="M16.3 24.4 L14 19.6 H18.6Z" fill="#106010"/><circle cx="16.3" cy="9.8" r="1" fill="#e03030"/><text x="0.6" y="12" font-size="4.5" fill="#1010e0" font-family="Liberation Sans">Z</text></svg>
<div class="a" style="left:713px;top:368.5px;width:40px;height:17.5px;background:#2c2f36;border-radius:9px"></div>
<div class="a" style="left:703px;top:365px;width:24.5px;height:24.5px;background:#4a4d56;border-radius:50%;box-shadow:0 0 1px #333"></div>
<svg class="a" style="left:703px;top:365px" width="25" height="25" viewBox="0 0 25 25"><defs><linearGradient id="arc" x1="0" x2="0" y1="0" y2="1"><stop offset="0" stop-color="#30b8a8"/><stop offset="1" stop-color="#90d050"/></linearGradient></defs><path d="M13.4 1.3 A11.2 11.2 0 0 1 20.6 20.4" fill="none" stroke="url(#arc)" stroke-width="1"/></svg>
<div class="t" style="left:708px;top:371.6px;font-size:11px;color:#e4e4e8;letter-spacing:-0.2px">35<span style="font-size:4.2px;letter-spacing:0">%</span></div>
<div class="a" style="left:729.5px;top:372.5px;width:2px;height:2px;border-radius:50%;background:#3aa8e8"></div>
<div class="a" style="left:729.5px;top:381.4px;width:2px;height:2px;border-radius:50%;background:#30c040"></div>
<div class="t" style="left:739.2px;top:370.6px;font-size:5.4px;color:#eee;font-weight:bold">0<span style="font-size:3.4px;font-weight:normal;color:#ccc">K/S</span></div>
<div class="t" style="left:739.2px;top:380.2px;font-size:5.4px;color:#eee;font-weight:bold">0<span style="font-size:3.4px;font-weight:normal;color:#ccc">K/S</span></div>
<!-- model -->
<svg class="a" style="left:0;top:0" width="790" height="444" viewBox="0 0 790 444">
<defs>
<linearGradient id="gb" x1="0" x2="1" y1="0" y2="0"><stop offset="0" stop-color="#6c6a88"/><stop offset="0.5" stop-color="#868ca0"/><stop offset="0.85" stop-color="#a8acc4"/><stop offset="1" stop-color="#9a9eb6"/></linearGradient>
<linearGradient id="gt" x1="0" x2="1" y1="0" y2="0"><stop offset="0" stop-color="#6a6886"/><stop offset="0.35" stop-color="#7a7e92"/><stop offset="0.7" stop-color="#a6aac4"/><stop offset="0.9" stop-color="#a2a6be"/><stop offset="1" stop-color="#8a8ea6"/></linearGradient>
<linearGradient id="gf" x1="0" x2="0" y1="0" y2="1"><stop offset="0" stop-color="#3c3c4a"/><stop offset="0.6" stop-color="#e8e8f4"/><stop offset="1" stop-color="#6a6a80"/></linearGradient>
<linearGradient id="gf2" x1="0" x2="0" y1="0" y2="1"><stop offset="0" stop-color="#34343e"/><stop offset="0.72" stop-color="#e0e0ee"/><stop offset="1" stop-color="#70708a"/></linearGradient>
<radialGradient id="gtip" cx="0.55" cy="0.45" r="0.6"><stop offset="0" stop-color="#ffffff"/><stop offset="1" stop-color="#a8a8c0"/></radialGradient>
<pattern id="thr" width="5" height="2.4" patternUnits="userSpaceOnUse"><rect width="5" height="2.4" fill="#24242c"/><path d="M0 1.6 L2.6 1.2" stroke="#9a9aa8" stroke-width="0.7"/><path d="M3 0.9 L5 0.6" stroke="#6a6a78" stroke-width="0.6"/></pattern><pattern id="gsk" width="5" height="3" patternUnits="userSpaceOnUse"><rect width="5" height="3" fill="#222228"/><rect x="0.6" y="0.6" width="1.6" height="0.8" fill="#3e3e48"/><rect x="3" y="1.8" width="1.6" height="0.8" fill="#383842"/></pattern>
</defs>
<rect x="474" y="129.4" width="28" height="26.1" fill="#7c7a92" stroke="#2c2c38" stroke-width="0.6"/>
<path d="M501.8 129.4 V131.6 H503.2 V128 H512.4 Q513.6 128.2 513.6 129.4 V156.4 Q513.6 157.6 512.4 157.6 H503.2 V152.8 H501.8 V155.5" fill="#7c7a92" stroke="#2c2c38" stroke-width="0.6"/>
<rect x="478.1" y="132.9" width="13.4" height="18.7" fill="#7e7c94" stroke="#2c2c38" stroke-width="0.6"/>
<rect x="478.6" y="137.4" width="12.9" height="10.2" fill="url(#gf)" stroke="#2c2c38" stroke-width="0.5"/>
<rect x="491.5" y="135.2" width="22.1" height="14.4" fill="url(#gf2)" stroke="#2c2c38" stroke-width="0.6"/>
<path d="M492.2 133 V151.6" stroke="#151520" stroke-width="1.2"/>
<rect x="476" y="141" width="2" height="5" fill="#d8d8e6"/>
<path d="M406.6 151.3 L398.4 127.6 L401.8 122.6 L406.3 117 L411.9 111.9 L419.2 107.4 L419.2 102.4 Q420.2 99.2 428.8 96.2 L436.4 94.2 L446.8 92.2 L449.8 94.6 L449.8 97.6 Q466 98.8 478.2 102.5 L485.5 119 L482.2 120.1 L485.5 125.9 L484.3 128.4 L476 130.5 L415.2 148.2Z" fill="#8c8ca6" stroke="#2c2c38" stroke-width="0.8"/>
<polygon points="428.6,96.6 436,95 436.4,101.4 430,102.6" fill="#a8a6c2" stroke="#3a3a48" stroke-width="0.4"/>
<path d="M404.6 130 L411.9 120.4 L419.2 114.2 L428.8 108 L440 104 L451.3 102.4 L465 103 L476.8 107.6 L476.8 109.0 L404.6 129.5Z" fill="#46445a" stroke="#2a2834" stroke-width="0.6"/>
<polygon points="404.6,129.5 477.0,108.9 477.0,111.3 404.6,131.9" fill="#b4b2ca"/>
<polygon points="405.0,131.8 477.0,111.3 477.0,116.7 405.0,137.2" fill="url(#gsk)"/>
<polygon points="411.5,135.6 477.0,116.9 477.0,117.7 411.5,136.4" fill="#3a3a48"/>
<polygon points="411.5,136.4 477.0,117.7 477.0,122.5 411.5,141.2" fill="#9290a8"/>
<polygon points="413.0,140.8 477.0,122.5 477.0,123.7 413.0,142.0" fill="#4a4a5a"/>
<polygon points="413.0,142.0 477.0,123.7 477.0,125.1 413.0,143.4" fill="#e0e0ec"/>
<polygon points="405.2,138.7 414.2,136.2 415.2,148.2 406.6,151.3" fill="#8c8aa2" stroke="#2c2c38" stroke-width="0.6"/>
<circle cx="407.4" cy="146.2" r="1.1" fill="#b8b8c8" stroke="#333" stroke-width="0.4"/>
<polygon points="476,118.6 481.3,117.6 485.5,125.9 484.3,128.4 476,130.5" fill="#8c8aa2" stroke="#2c2c38" stroke-width="0.6"/>
<circle cx="482.2" cy="124.6" r="1.1" fill="#b8b8c8" stroke="#333" stroke-width="0.4"/>
<polygon points="415.2,142.9 475.8,125.7 475.8,170.6 465.1,190.5 465.1,210.0 425.3,210.0 425.3,190.5 415.2,173.4" fill="url(#gb)" stroke="#2c2c38" stroke-width="0.7"/>
<rect x="436.6" y="152.2" width="8.2" height="7.4" fill="#8e8ca6" stroke="#2c2c38" stroke-width="0.6"/>
<rect x="447.2" y="152.2" width="8.6" height="7.4" fill="#8e8ca6" stroke="#2c2c38" stroke-width="0.6"/>
<rect x="419.5" y="159.8" width="53" height="10.8" fill="#8a889e" stroke="#2c2c38" stroke-width="0.6"/>
<rect x="419.5" y="159.8" width="3" height="10.8" fill="#a8a6bc" stroke="#2c2c38" stroke-width="0.5"/>
<rect x="423" y="159.8" width="4.6" height="10.8" fill="#b0aec4" stroke="#2c2c38" stroke-width="0.5"/>
<rect x="463.9" y="159.8" width="4.6" height="10.8" fill="#a8a6bc" stroke="#2c2c38" stroke-width="0.5"/>
<rect x="468.5" y="159.8" width="4" height="10.8" fill="#9896ae" stroke="#2c2c38" stroke-width="0.5"/>
<rect x="434" y="168.4" width="22" height="1.2" fill="#3a3a48"/>
<rect x="417" y="170.6" width="57" height="2.8" fill="#7a788e"/>
<path d="M417 173.4 H474" stroke="#2c2c38" stroke-width="0.6"/>
<rect x="433.4" y="173.6" width="9.4" height="14.2" fill="#e6e6f0" stroke="#2c2c38" stroke-width="0.6"/>
<rect x="448.2" y="173.6" width="9.5" height="14.2" fill="#ececf4" stroke="#2c2c38" stroke-width="0.6"/>
<rect x="442.8" y="173.6" width="5.4" height="14.2" fill="#7c7a92"/>
<rect x="444.8" y="173.6" width="1.2" height="14.2" fill="#c8c8d8"/>
<rect x="424.6" y="173.6" width="2.7" height="8" fill="#a6a4ba" stroke="#2c2c38" stroke-width="0.5"/>
<rect x="464.5" y="173.6" width="2.7" height="8" fill="#a6a4ba" stroke="#2c2c38" stroke-width="0.5"/>
<rect x="435.4" y="188.2" width="20.3" height="22" fill="url(#thr)" stroke="#15151c" stroke-width="0.8"/>
<rect x="426.5" y="197" width="4.5" height="2" fill="#9a98b0" stroke="#2c2c38" stroke-width="0.4"/>
<rect x="429.9" y="209.9" width="30.4" height="2.7" fill="#8a889e" stroke="#2c2c38" stroke-width="0.6"/>
<path d="M435.3 212.6 H455.5 V371.2 A10.1 10.1 0 0 1 435.3 371.2Z" fill="url(#gt)" stroke="#2c2c38" stroke-width="0.8"/>
<path d="M455.2 268 V347.6" stroke="#101018" stroke-width="1.2"/>
<path d="M435.3 347.6 H455.5" stroke="#2c2c38" stroke-width="0.8"/>
<path d="M435.3 371.2 H455.5 A10.1 10.1 0 0 1 435.3 371.2Z" fill="url(#gtip)" stroke="#2c2c38" stroke-width="0.8"/>
<rect x="431.5" y="265.2" width="4" height="2" fill="#8a889e" stroke="#2c2c38" stroke-width="0.5"/>
<rect x="455.5" y="265.2" width="4" height="2" fill="#8a889e" stroke="#2c2c38" stroke-width="0.5"/>
<rect x="434.6" y="260.4" width="1.2" height="7" fill="#8a889e" stroke="#2c2c38" stroke-width="0.4"/>
<rect x="455" y="260.4" width="1.2" height="7" fill="#8a889e" stroke="#2c2c38" stroke-width="0.4"/>
</svg>
<!-- bottom -->
<div class="a" style="left:0;top:410px;width:790px;height:6.5px;background:#fbfbfb;border-top:1px solid #a8acb4;border-bottom:1px solid #cfcfcf"></div>
<div class="a" style="left:1px;top:410.5px;width:26px;height:5.5px;background:#8e8e8e"></div>
<div class="a" style="left:2.0px;top:411.5px;width:5px;height:3.6px;border:0.6px solid #a8a8a8"></div>
<div class="a" style="left:8.4px;top:411.5px;width:5px;height:3.6px;border:0.6px solid #a8a8a8"></div>
<div class="a" style="left:14.8px;top:411.5px;width:5px;height:3.6px;border:0.6px solid #a8a8a8"></div>
<div class="a" style="left:21.2px;top:411.5px;width:5px;height:3.6px;border:0.6px solid #a8a8a8"></div>
<div class="a" style="left:27px;top:410.5px;width:19.5px;height:5.8px;background:#ffffff"></div>
<div class="t" style="left:32.6px;top:410.8px;font-size:5px;color:#222"><b><svg class="g" viewBox="0 0 10 10"><use href="#g5"/></svg><svg class="g" viewBox="0 0 10 10"><use href="#g1"/></svg></b></div>
<div class="a" style="left:47px;top:410.5px;width:24px;height:5.8px;background:#e6e6e6;border-left:1px solid #b4b4b4;border-right:1px solid #c8c8c8"></div>
<div class="t" style="left:50px;top:410.8px;font-size:5px;color:#222">3D <span class="m"><svg class="g" viewBox="0 0 10 10"><use href="#g2"/></svg><svg class="g" viewBox="0 0 10 10"><use href="#g5"/></svg></span></div>
<div class="a" style="left:71px;top:410.5px;width:34.5px;height:5.8px;background:#e6e6e6;border-right:1px solid #b8b8b8"></div>
<div class="t" style="left:74.6px;top:410.8px;font-size:5px;color:#222"><span class="m"><svg class="g" viewBox="0 0 10 10"><use href="#g1"/></svg><svg class="g" viewBox="0 0 10 10"><use href="#g2"/></svg><svg class="g" viewBox="0 0 10 10"><use href="#g0"/></svg><svg class="g" viewBox="0 0 10 10"><use href="#g1"/></svg></span>1</div>
<div class="a" style="left:106px;top:410.5px;width:683px;height:5.8px;background:#fbfbfb;border-left:1px solid #c8c8c8"></div>
<div class="t" style="left:1px;top:418.4px;font-size:5.3px;color:#2a2a2a;transform:scaleX(0.93);transform-origin:0 0">SOLIDWORKS Premium 2019 SP0.0</div>
<div class="t" style="left:655.6px;top:418.9px;font-size:5px;color:#1a1a1a" class="m"><svg class="g" viewBox="0 0 10 10"><use href="#g3"/></svg><svg class="g" viewBox="0 0 10 10"><use href="#g4"/></svg><svg class="g" viewBox="0 0 10 10"><use href="#g1"/></svg></div>
<div class="a" style="left:673px;top:417px;width:1px;height:7px;background:#e0e0e0"></div>
<div class="t" style="left:678px;top:418.9px;font-size:5px;color:#1a1a1a" class="m"><svg class="g" viewBox="0 0 10 10"><use href="#g3"/></svg><svg class="g" viewBox="0 0 10 10"><use href="#g2"/></svg><svg class="g" viewBox="0 0 10 10"><use href="#g2"/></svg> <svg class="g" viewBox="0 0 10 10"><use href="#g3"/></svg><svg class="g" viewBox="0 0 10 10"><use href="#g4"/></svg><svg class="g" viewBox="0 0 10 10"><use href="#g4"/></svg></div>
<div class="a" style="left:713px;top:417px;width:1px;height:7px;background:#e0e0e0"></div>
<div class="a" style="left:718.5px;top:417px;width:1px;height:7px;background:#e0e0e0"></div>
<div class="t" style="left:729.6px;top:419px;font-size:5.3px;color:#222;letter-spacing:0.1px">MMGS</div>
<div class="a" style="left:752.8px;top:420.4px;width:1.5px;height:1.5px;background:#333"></div>
<svg class="a" style="left:782px;top:418px" width="8" height="6" viewBox="0 0 8 6"><path d="M1 0.8 H7 V4 H4 L2 5.6 V4 H1Z" fill="#d8d8d8" stroke="#777" stroke-width="0.7"/></svg>
<div class="a" style="left:0;top:424px;width:790px;height:20px;background:#d4e6f4"></div>
<svg class="a" style="left:6px;top:429px" width="11" height="10" viewBox="0 0 11 10"><rect x="0.3" y="0.3" width="10.4" height="9.4" rx="1.6" fill="#1a78d8"/><rect x="2" y="1.8" width="3" height="6.6" fill="#ffffff"/><rect x="5.6" y="1.8" width="3.4" height="6.6" fill="#38b8f8"/></svg>
<svg class="a" style="left:263.5px;top:429.5px" width="10" height="10" viewBox="0 0 10 10"><rect x="0" y="0" width="4.6" height="4.6" fill="#1a9ae8"/><rect x="5.2" y="0" width="4.6" height="4.6" fill="#1a9ae8"/><rect x="0" y="5.2" width="4.6" height="4.6" fill="#0e84d8"/><rect x="5.2" y="5.2" width="4.6" height="4.6" fill="#0e84d8"/></svg>
<svg class="a" style="left:282px;top:429.5px" width="10" height="10" viewBox="0 0 10 10"><circle cx="5.8" cy="4" r="3" fill="none" stroke="#222" stroke-width="1.1"/><path d="M3.6 6.2 L0.8 9" stroke="#222" stroke-width="1.2"/></svg>
<svg class="a" style="left:299.5px;top:429.5px" width="9" height="10" viewBox="0 0 9 10"><rect x="2.6" y="0.6" width="6" height="6" fill="#e6e6e6" stroke="#c8c8c8" stroke-width="0.4"/><path d="M0 3 H2.4 V7 H6.8 V9.6 H0Z" fill="#151515"/></svg>
<svg class="a" style="left:318px;top:429.5px" width="10" height="10" viewBox="0 0 10 10"><circle cx="5" cy="5" r="4.8" fill="#1c7ad4"/><path d="M9.8 5 A4.8 4.8 0 0 0 1.4 1.8 Q5 0.8 6.6 4 H3.2 Q3 6.8 6.6 7.4 Q8.4 7.6 9.4 7" fill="#4ad06a"/><path d="M3.2 4.6 Q3.6 7.6 7 7.6" fill="none" stroke="#a8e0f8" stroke-width="0.8"/></svg>
<svg class="a" style="left:336px;top:429.5px" width="10" height="10" viewBox="0 0 10 10"><path d="M0.4 1 H4 L5 2 H9.6 V9.4 H0.4Z" fill="#f4c430"/><rect x="0.4" y="3" width="9.2" height="6.4" fill="#ffd44a"/><rect x="2.4" y="6" width="5.2" height="2" fill="#1a78d0"/></svg>
<svg class="a" style="left:354px;top:429.5px" width="10" height="10" viewBox="0 0 10 10"><path d="M0.4 4 L5 0.8 L9.6 4 V9.4 H0.4Z" fill="#1a6ac8"/><path d="M0.4 4 L5 6.8 L9.6 4 V9.4 H0.4Z" fill="#34a8ee"/><path d="M2.2 3.4 H7.8 L5 5.4Z" fill="#fff"/></svg>
<svg class="a" style="left:372px;top:429.5px" width="10" height="10" viewBox="0 0 10 10"><rect x="0.4" y="2" width="9.2" height="7.6" rx="1" fill="#0e3a7a"/><path d="M3 2 Q3 0.4 5 0.4 Q7 0.4 7 2" fill="none" stroke="#3aa8e8" stroke-width="0.9"/><rect x="3" y="3.6" width="1.8" height="1.8" fill="#f04020"/><rect x="5.2" y="3.6" width="1.8" height="1.8" fill="#70c020"/><rect x="3" y="5.8" width="1.8" height="1.8" fill="#10a0e8"/><rect x="5.2" y="5.8" width="1.8" height="1.8" fill="#ffb800"/></svg>
<svg class="a" style="left:390px;top:429.5px" width="10" height="10" viewBox="0 0 10 10"><circle cx="5" cy="5" r="4.6" fill="#2a90e0"/><circle cx="5" cy="5" r="3" fill="#e8f4fc"/><path d="M3 8 Q5 5 9 8" fill="#ffffff"/></svg>
<svg class="a" style="left:409px;top:429.5px" width="10" height="10" viewBox="0 0 10 10"><circle cx="5" cy="5" r="3.6" fill="#6cc030"/><path d="M3.4 4 H6.6 M3.4 6 H6.6" stroke="#e8f8d8" stroke-width="0.9"/><path d="M1 9 L2.4 6.8 M9 1 L7.6 3" stroke="#6cc030" stroke-width="0.9"/></svg>
<svg class="a" style="left:427px;top:429.5px" width="10" height="10" viewBox="0 0 10 10"><circle cx="5" cy="5" r="4.6" fill="#f040a0"/><path d="M5 5 L0.4 5 A4.6 4.6 0 0 1 5 0.4Z" fill="#30c8f0"/><path d="M5 5 L0.4 5 A4.6 4.6 0 0 0 5 9.6Z" fill="#50d040"/><path d="M5 5 L5 9.6 A4.6 4.6 0 0 0 9.6 5Z" fill="#f8c020"/><circle cx="5" cy="5" r="1.8" fill="#fff"/></svg>
<svg class="a" style="left:445px;top:429.5px" width="10" height="10" viewBox="0 0 10 10"><circle cx="5" cy="5" r="4.7" fill="#e04030"/><path d="M5 5 L0.9 7.4 A4.7 4.7 0 0 1 1 2.6Z" fill="#30a050"/><path d="M5 5 L0.9 7.4 A4.7 4.7 0 0 0 9.1 7.4Z" fill="#30a050"/><path d="M5 5 L9.7 5 A4.7 4.7 0 0 1 5 9.7 Z" fill="#f8c020"/><circle cx="5" cy="5" r="2.1" fill="#fff"/><circle cx="5" cy="5" r="1.6" fill="#2a78e0"/></svg>
<svg class="a" style="left:464px;top:429px" width="8" height="11" viewBox="0 0 8 11"><rect x="0.4" y="0.4" width="7.2" height="8.6" fill="#3aa8d0"/><path d="M1.6 3 H6.4 M1.6 5 H6.4" stroke="#1a6a90" stroke-width="0.6"/><rect x="0.4" y="9" width="7.2" height="1.4" fill="#d07030"/></svg>
<svg class="a" style="left:481px;top:429.5px" width="10" height="10" viewBox="0 0 10 10"><rect x="0" y="0" width="10" height="10" rx="2" fill="#20c040"/><path d="M7 3 H3.4 Q2.6 3 2.6 4 Q2.6 5 3.4 5 H6.6 Q7.4 5 7.4 6 Q7.4 7 6.6 7 H3" fill="none" stroke="#fff" stroke-width="1"/></svg>
<svg class="a" style="left:499px;top:429.5px" width="10" height="10" viewBox="0 0 10 10"><rect x="0" y="0" width="10" height="10" rx="2" fill="#3aa0f4"/><path d="M2 3 L3.4 7 L5 4 L6.6 7 L8 3" fill="none" stroke="#fff" stroke-width="1.1"/></svg>
<div class="a" style="left:514px;top:426px;width:16px;height:16px;background:#e6f0f8;border-radius:2px"></div>
<svg class="a" style="left:517px;top:429px" width="11" height="11" viewBox="0 0 11 11"><path d="M0.5 2.6 L3.6 0.5 H10.5 V8 L8 10.5 H0.5Z" fill="#c01820"/><path d="M0.5 2.6 H8 V10.5" fill="none" stroke="#801010" stroke-width="0.6"/><path d="M2 4 V8 M4.4 4 Q6 5 5 8" stroke="#fff" stroke-width="0.7" fill="none"/><rect x="5" y="7.6" width="5.6" height="2.6" fill="#555"/></svg>
<div class="a" style="left:519px;top:440.6px;width:6.5px;height:1.3px;background:#1a6ad8;border-radius:1px"></div>
<div class="a" style="left:340px;top:440.8px;width:2px;height:1px;background:#777"></div>
<div class="a" style="left:412px;top:440.8px;width:2px;height:1px;background:#777"></div>
<div class="a" style="left:430px;top:440.8px;width:2px;height:1px;background:#777"></div>
<div class="a" style="left:448px;top:440.8px;width:2px;height:1px;background:#777"></div>
<div class="a" style="left:466px;top:440.8px;width:2px;height:1px;background:#777"></div>
<div class="a" style="left:484px;top:440.8px;width:2px;height:1px;background:#777"></div>
<div class="a" style="left:503px;top:440.8px;width:2px;height:1px;background:#777"></div>
<svg class="a" style="left:675px;top:431.5px" width="7" height="5" viewBox="0 0 7 5"><path d="M0.6 4.2 L3.5 1 L6.4 4.2" fill="none" stroke="#333" stroke-width="0.9"/></svg>
<div class="a" style="left:685px;top:431px;width:6px;height:7px;background:#1a78e8;border-radius:1px"></div>
<svg class="a" style="left:686px;top:432px" width="5" height="5"><path d="M1 1 L4 2.5 L1.5 4" fill="#fff"/></svg>
<svg class="a" style="left:694px;top:431px" width="8" height="8" viewBox="0 0 8 8"><path d="M4 0.3 L7.6 1.4 V4 Q7.6 6.6 4 7.8 Q0.4 6.6 0.4 4 V1.4Z" fill="#5a6ae8"/><path d="M2.2 3.2 Q4 5 5.8 3.2" fill="none" stroke="#c8d0ff" stroke-width="0.7"/></svg>
<div class="t" style="left:705.5px;top:430.6px;font-size:6.6px;color:#333" class="m"><svg class="g" viewBox="0 0 10 10"><use href="#g5"/></svg></div>
<div class="t" style="left:721.5px;top:430.6px;font-size:6.6px;color:#333" class="m"><svg class="g" viewBox="0 0 10 10"><use href="#g4"/></svg></div>
<svg class="a" style="left:737px;top:431px" width="8" height="8" viewBox="0 0 8 8"><rect x="0.6" y="0.8" width="6" height="4.6" fill="none" stroke="#333" stroke-width="0.8"/><path d="M3.6 5.4 V7.2 M2 7.4 H5.2" stroke="#333" stroke-width="0.8"/><circle cx="6.8" cy="1.2" r="1" fill="#333"/></svg>
<svg class="a" style="left:747px;top:431.5px" width="7" height="7" viewBox="0 0 7 7"><path d="M0.5 2.5 H2 L3.8 0.8 V6.2 L2 4.5 H0.5Z" fill="none" stroke="#333" stroke-width="0.7"/><path d="M5 2 V5 M6.4 1.2 V5.8" stroke="#333" stroke-width="0.6"/></svg>
<div class="t" style="left:771px;top:428.8px;font-size:4.9px;color:#222">15:50</div>
<div class="t" style="left:760.2px;top:435px;font-size:4.9px;color:#222">2022/8/15</div>
</body></html>
